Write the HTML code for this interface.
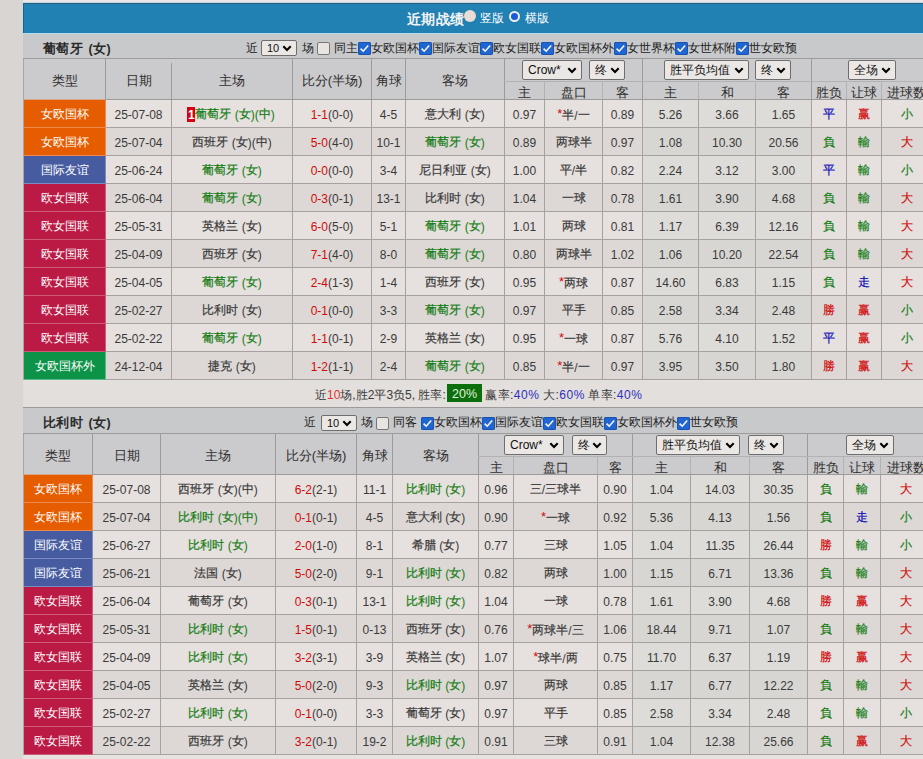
<!DOCTYPE html><html><head><meta charset="utf-8"><style>
html,body{margin:0;padding:0;}
body{width:923px;height:759px;overflow:hidden;position:relative;background:#d9d5d2;font-family:"Liberation Sans", sans-serif;font-size:12px;}
.a{position:absolute;}
.t{position:absolute;text-align:center;white-space:nowrap;overflow:visible;}
.c{font-style:normal;font-weight:inherit;}
.td .c{-webkit-text-stroke:0.2px currentColor;position:relative;top:-1px;}
.ty .c{position:relative;top:-1px;}
.sel{position:absolute;background:#ebe7e5;border:1px solid #6e6e6e;border-radius:2px;color:#111;white-space:nowrap;box-sizing:content-box;}
.sel .sl{position:absolute;left:5px;top:0;}
.sel .chev{position:absolute;right:4px;top:50%;margin-top:-3.5px;}
.badge{display:inline-block;background:#d80010;color:#fff;font-weight:bold;width:8px;height:15px;line-height:16px;text-align:center;font-size:12px;vertical-align:middle;margin-top:-3px;margin-left:-2px;}
</style></head><body><div class="a" style="left:23px;top:0px;width:900px;height:2px;background:#ede6e4;"></div><div class="a" style="left:22px;top:2px;width:901px;height:32px;background:#b8dcec;"></div><div class="a" style="left:23px;top:3px;width:900px;height:30px;background:#2181b3;box-shadow: inset 1px 1px 0 #2b5f78;"></div><div class="t" style="left:407px;top:3.5px;width:60px;height:30px;line-height:30px;color:#f4f4f4;font-weight:600;font-size:14px;letter-spacing:0.3px;text-align:left;"><i class="c">近期战绩</i></div><div class="a" style="left:464px;top:10px;width:12px;height:12px;border-radius:50%;background:#e8dcd4;"></div><div class="t" style="left:480px;top:3px;width:30px;height:30px;line-height:30px;color:#ffffff;text-align:left;"><i class="c">竖版</i></div><div class="a" style="left:509px;top:10.5px;width:7px;height:7px;border-radius:50%;background:#1a5cd8;border:2px solid #eeeeee;"></div><div class="t" style="left:525px;top:3px;width:30px;height:30px;line-height:30px;color:#ffffff;text-align:left;"><i class="c">横版</i></div><div class="a" style="left:23px;top:34px;width:900px;height:24px;background:#c8c9cb;"></div><div class="a" style="left:23px;top:58px;width:900px;height:1px;background:#9c9a9a;"></div><div class="t" style="left:43px;top:36.5px;width:120px;height:24px;line-height:24px;color:#2a2a2a;font-weight:bold;font-size:12.5px;letter-spacing:0.4px;word-spacing:1.5px;text-align:left;"><i class="c">葡萄牙</i> (<i class="c">女</i>)</div><div class="t" style="left:246px;top:36px;width:14px;height:24px;line-height:24px;color:#222;text-align:left;"><i class="c">近</i></div><div class="sel" style="left:261px;top:40px;width:34px;height:14px;line-height:14px;font-size:11px;"><span class="sl">10</span><svg class="chev" width="10" height="7" viewBox="0 0 10 7"><path d="M1.3 1.2 L5 4.9 L8.7 1.2" fill="none" stroke="#000" stroke-width="2.1"/></svg></div><div class="t" style="left:302px;top:36px;width:14px;height:24px;line-height:24px;color:#222;text-align:left;"><i class="c">场</i></div><div class="a" style="left:317px;top:42px;width:11px;height:11px;background:#e8e4e2;border:1px solid #777;border-radius:2px;"></div><div class="t" style="left:334px;top:36px;width:26px;height:24px;line-height:24px;color:#222;text-align:left;"><i class="c">同主</i></div><div class="a" style="left:358px;top:42px;width:13px;height:13px;background:#2066d2;border-radius:2px;box-shadow:inset 0 0 0 1px #1a52b0;"><svg width="13" height="13" viewBox="0 0 13 13" style="position:absolute;left:0;top:0"><path d="M2.6 6.6 L5.2 9.2 L10.2 3.4" fill="none" stroke="#f4f4f4" stroke-width="1.6"/></svg></div><div class="t" style="left:371px;top:36px;width:50px;height:24px;line-height:24px;color:#222;text-align:left;"><i class="c">女欧国杯</i></div><div class="a" style="left:419px;top:42px;width:13px;height:13px;background:#2066d2;border-radius:2px;box-shadow:inset 0 0 0 1px #1a52b0;"><svg width="13" height="13" viewBox="0 0 13 13" style="position:absolute;left:0;top:0"><path d="M2.6 6.6 L5.2 9.2 L10.2 3.4" fill="none" stroke="#f4f4f4" stroke-width="1.6"/></svg></div><div class="t" style="left:432px;top:36px;width:50px;height:24px;line-height:24px;color:#222;text-align:left;"><i class="c">国际友谊</i></div><div class="a" style="left:480px;top:42px;width:13px;height:13px;background:#2066d2;border-radius:2px;box-shadow:inset 0 0 0 1px #1a52b0;"><svg width="13" height="13" viewBox="0 0 13 13" style="position:absolute;left:0;top:0"><path d="M2.6 6.6 L5.2 9.2 L10.2 3.4" fill="none" stroke="#f4f4f4" stroke-width="1.6"/></svg></div><div class="t" style="left:493px;top:36px;width:50px;height:24px;line-height:24px;color:#222;text-align:left;"><i class="c">欧女国联</i></div><div class="a" style="left:541px;top:42px;width:13px;height:13px;background:#2066d2;border-radius:2px;box-shadow:inset 0 0 0 1px #1a52b0;"><svg width="13" height="13" viewBox="0 0 13 13" style="position:absolute;left:0;top:0"><path d="M2.6 6.6 L5.2 9.2 L10.2 3.4" fill="none" stroke="#f4f4f4" stroke-width="1.6"/></svg></div><div class="t" style="left:554px;top:36px;width:62px;height:24px;line-height:24px;color:#222;text-align:left;"><i class="c">女欧国杯外</i></div><div class="a" style="left:614px;top:42px;width:13px;height:13px;background:#2066d2;border-radius:2px;box-shadow:inset 0 0 0 1px #1a52b0;"><svg width="13" height="13" viewBox="0 0 13 13" style="position:absolute;left:0;top:0"><path d="M2.6 6.6 L5.2 9.2 L10.2 3.4" fill="none" stroke="#f4f4f4" stroke-width="1.6"/></svg></div><div class="t" style="left:627px;top:36px;width:50px;height:24px;line-height:24px;color:#222;text-align:left;"><i class="c">女世界杯</i></div><div class="a" style="left:675px;top:42px;width:13px;height:13px;background:#2066d2;border-radius:2px;box-shadow:inset 0 0 0 1px #1a52b0;"><svg width="13" height="13" viewBox="0 0 13 13" style="position:absolute;left:0;top:0"><path d="M2.6 6.6 L5.2 9.2 L10.2 3.4" fill="none" stroke="#f4f4f4" stroke-width="1.6"/></svg></div><div class="t" style="left:688px;top:36px;width:50px;height:24px;line-height:24px;color:#222;text-align:left;"><i class="c">女世杯附</i></div><div class="a" style="left:736px;top:42px;width:13px;height:13px;background:#2066d2;border-radius:2px;box-shadow:inset 0 0 0 1px #1a52b0;"><svg width="13" height="13" viewBox="0 0 13 13" style="position:absolute;left:0;top:0"><path d="M2.6 6.6 L5.2 9.2 L10.2 3.4" fill="none" stroke="#f4f4f4" stroke-width="1.6"/></svg></div><div class="t" style="left:749px;top:36px;width:50px;height:24px;line-height:24px;color:#222;text-align:left;"><i class="c">世女欧预</i></div><div class="a" style="left:23px;top:59px;width:900px;height:40px;background:#cbcacc;"></div><div class="a" style="left:23px;top:99px;width:900px;height:1px;background:#9c9a9a;"></div><div class="t" style="left:24px;top:61px;width:81px;height:40px;line-height:40px;color:#2e2e2e;font-size:13px;"><i class="c">类型</i></div><div class="t" style="left:106px;top:61px;width:65px;height:40px;line-height:40px;color:#2e2e2e;font-size:13px;"><i class="c">日期</i></div><div class="t" style="left:172px;top:61px;width:120px;height:40px;line-height:40px;color:#2e2e2e;font-size:13px;"><i class="c">主场</i></div><div class="t" style="left:293px;top:61px;width:78px;height:40px;line-height:40px;color:#2e2e2e;font-size:13px;"><i class="c">比分</i>(<i class="c">半场</i>)</div><div class="t" style="left:372px;top:61px;width:33px;height:40px;line-height:40px;color:#2e2e2e;font-size:13px;"><i class="c">角球</i></div><div class="t" style="left:406px;top:61px;width:98px;height:40px;line-height:40px;color:#2e2e2e;font-size:13px;"><i class="c">客场</i></div><div class="a" style="left:105px;top:59px;width:1px;height:40px;background:#9c9a9a;"></div><div class="a" style="left:171px;top:59px;width:1px;height:40px;background:#9c9a9a;"></div><div class="a" style="left:292px;top:59px;width:1px;height:40px;background:#9c9a9a;"></div><div class="a" style="left:371px;top:59px;width:1px;height:40px;background:#9c9a9a;"></div><div class="a" style="left:405px;top:59px;width:1px;height:40px;background:#9c9a9a;"></div><div class="a" style="left:504px;top:59px;width:1px;height:40px;background:#9c9a9a;"></div><div class="a" style="left:642px;top:59px;width:1px;height:40px;background:#9c9a9a;"></div><div class="a" style="left:811px;top:59px;width:1px;height:40px;background:#9c9a9a;"></div><div class="a" style="left:504px;top:81px;width:419px;height:1px;background:#b3b1b1;"></div><div class="a" style="left:544px;top:82px;width:1px;height:17px;background:#b3b1b1;"></div><div class="a" style="left:602px;top:82px;width:1px;height:17px;background:#b3b1b1;"></div><div class="a" style="left:698px;top:82px;width:1px;height:17px;background:#b3b1b1;"></div><div class="a" style="left:755px;top:82px;width:1px;height:17px;background:#b3b1b1;"></div><div class="a" style="left:846px;top:82px;width:1px;height:17px;background:#b3b1b1;"></div><div class="a" style="left:881px;top:82px;width:1px;height:17px;background:#b3b1b1;"></div><div class="t" style="left:505px;top:84px;width:39px;height:17px;line-height:17px;color:#2e2e2e;white-space:nowrap;font-size:13px;"><i class="c">主</i></div><div class="t" style="left:545px;top:84px;width:57px;height:17px;line-height:17px;color:#2e2e2e;white-space:nowrap;font-size:13px;"><i class="c">盘口</i></div><div class="t" style="left:603px;top:84px;width:39px;height:17px;line-height:17px;color:#2e2e2e;white-space:nowrap;font-size:13px;"><i class="c">客</i></div><div class="t" style="left:643px;top:84px;width:55px;height:17px;line-height:17px;color:#2e2e2e;white-space:nowrap;font-size:13px;"><i class="c">主</i></div><div class="t" style="left:699px;top:84px;width:56px;height:17px;line-height:17px;color:#2e2e2e;white-space:nowrap;font-size:13px;"><i class="c">和</i></div><div class="t" style="left:756px;top:84px;width:55px;height:17px;line-height:17px;color:#2e2e2e;white-space:nowrap;font-size:13px;"><i class="c">客</i></div><div class="t" style="left:812px;top:84px;width:34px;height:17px;line-height:17px;color:#2e2e2e;white-space:nowrap;font-size:13px;"><i class="c">胜负</i></div><div class="t" style="left:847px;top:84px;width:34px;height:17px;line-height:17px;color:#2e2e2e;white-space:nowrap;font-size:13px;"><i class="c">让球</i></div><div class="t" style="left:882px;top:84px;width:49px;height:17px;line-height:17px;color:#2e2e2e;white-space:nowrap;font-size:13px;"><i class="c">进球数</i></div><div class="sel" style="left:522px;top:60px;width:58px;height:18px;line-height:18px;font-size:12px;"><span class="sl">Crow*</span><svg class="chev" width="10" height="7" viewBox="0 0 10 7"><path d="M1.3 1.2 L5 4.9 L8.7 1.2" fill="none" stroke="#000" stroke-width="2.1"/></svg></div><div class="sel" style="left:589px;top:60px;width:34px;height:18px;line-height:18px;font-size:12px;"><span class="sl"><i class="c">终</i></span><svg class="chev" width="10" height="7" viewBox="0 0 10 7"><path d="M1.3 1.2 L5 4.9 L8.7 1.2" fill="none" stroke="#000" stroke-width="2.1"/></svg></div><div class="sel" style="left:664px;top:60px;width:83px;height:18px;line-height:18px;font-size:12px;"><span class="sl"><i class="c">胜平负均值</i></span><svg class="chev" width="10" height="7" viewBox="0 0 10 7"><path d="M1.3 1.2 L5 4.9 L8.7 1.2" fill="none" stroke="#000" stroke-width="2.1"/></svg></div><div class="sel" style="left:755px;top:60px;width:34px;height:18px;line-height:18px;font-size:12px;"><span class="sl"><i class="c">终</i></span><svg class="chev" width="10" height="7" viewBox="0 0 10 7"><path d="M1.3 1.2 L5 4.9 L8.7 1.2" fill="none" stroke="#000" stroke-width="2.1"/></svg></div><div class="sel" style="left:848px;top:60px;width:46px;height:18px;line-height:18px;font-size:12px;"><span class="sl"><i class="c">全场</i></span><svg class="chev" width="10" height="7" viewBox="0 0 10 7"><path d="M1.3 1.2 L5 4.9 L8.7 1.2" fill="none" stroke="#000" stroke-width="2.1"/></svg></div><div class="a" style="left:23px;top:100px;width:1px;height:28px;background:#c9c3c1;"></div><div class="a" style="left:24px;top:100px;width:81px;height:27px;background:#e65c00;"></div><div class="a" style="left:24px;top:127px;width:81px;height:1px;background:#ec8a50;"></div><div class="a" style="left:105px;top:100px;width:1px;height:28px;background:#ec8a50;"></div><div class="t ty" style="left:24px;top:102px;width:81px;height:27px;line-height:27px;color:#ffffff;white-space:nowrap;"><i class="c">女欧国杯</i></div><div class="a" style="left:106px;top:100px;width:65px;height:27px;background:#e6e0de;"></div><div class="a" style="left:106px;top:127px;width:66px;height:1px;background:#a5a2a0;"></div><div class="a" style="left:171px;top:100px;width:1px;height:28px;background:#a5a2a0;"></div><div class="t td" style="left:106px;top:102px;width:65px;height:27px;line-height:27px;color:#3a3a3a;white-space:nowrap;">25-07-08</div><div class="a" style="left:172px;top:100px;width:120px;height:27px;background:#e6e0de;"></div><div class="a" style="left:172px;top:127px;width:121px;height:1px;background:#a5a2a0;"></div><div class="a" style="left:292px;top:100px;width:1px;height:28px;background:#a5a2a0;"></div><div class="t td" style="left:172px;top:102px;width:120px;height:27px;line-height:27px;color:#3a3a3a;white-space:nowrap;"><span class="badge">1</span><span style="color:#157d15"><i class="c">葡萄牙</i> (<i class="c">女</i>)(<i class="c">中</i>)</span></div><div class="a" style="left:293px;top:100px;width:78px;height:27px;background:#e6e0de;"></div><div class="a" style="left:293px;top:127px;width:79px;height:1px;background:#a5a2a0;"></div><div class="a" style="left:371px;top:100px;width:1px;height:28px;background:#a5a2a0;"></div><div class="t td" style="left:293px;top:102px;width:78px;height:27px;line-height:27px;color:#3a3a3a;white-space:nowrap;"><span style="color:#d00a0a">1-1</span>(0-0)</div><div class="a" style="left:372px;top:100px;width:33px;height:27px;background:#e6e0de;"></div><div class="a" style="left:372px;top:127px;width:34px;height:1px;background:#a5a2a0;"></div><div class="a" style="left:405px;top:100px;width:1px;height:28px;background:#a5a2a0;"></div><div class="t td" style="left:372px;top:102px;width:33px;height:27px;line-height:27px;color:#3a3a3a;white-space:nowrap;">4-5</div><div class="a" style="left:406px;top:100px;width:98px;height:27px;background:#e6e0de;"></div><div class="a" style="left:406px;top:127px;width:99px;height:1px;background:#a5a2a0;"></div><div class="a" style="left:504px;top:100px;width:1px;height:28px;background:#a5a2a0;"></div><div class="t td" style="left:406px;top:102px;width:98px;height:27px;line-height:27px;color:#3a3a3a;white-space:nowrap;"><span style="color:#3a3a3a"><i class="c">意大利</i> (<i class="c">女</i>)</span></div><div class="a" style="left:505px;top:100px;width:39px;height:27px;background:#e6e0de;"></div><div class="a" style="left:505px;top:127px;width:40px;height:1px;background:#a5a2a0;"></div><div class="a" style="left:544px;top:100px;width:1px;height:28px;background:#a5a2a0;"></div><div class="t td" style="left:505px;top:102px;width:39px;height:27px;line-height:27px;color:#3a3a3a;white-space:nowrap;">0.97</div><div class="a" style="left:545px;top:100px;width:57px;height:27px;background:#e6e0de;"></div><div class="a" style="left:545px;top:127px;width:58px;height:1px;background:#a5a2a0;"></div><div class="a" style="left:602px;top:100px;width:1px;height:28px;background:#a5a2a0;"></div><div class="t td" style="left:545px;top:102px;width:57px;height:27px;line-height:27px;color:#3a3a3a;white-space:nowrap;"><span style="color:#d00a0a;position:relative;top:-2px;font-size:13px">*</span><i class="c">半</i>/<i class="c">一</i></div><div class="a" style="left:603px;top:100px;width:39px;height:27px;background:#e6e0de;"></div><div class="a" style="left:603px;top:127px;width:40px;height:1px;background:#a5a2a0;"></div><div class="a" style="left:642px;top:100px;width:1px;height:28px;background:#a5a2a0;"></div><div class="t td" style="left:603px;top:102px;width:39px;height:27px;line-height:27px;color:#3a3a3a;white-space:nowrap;">0.89</div><div class="a" style="left:643px;top:100px;width:55px;height:27px;background:#dddcd8;"></div><div class="a" style="left:643px;top:127px;width:56px;height:1px;background:#a5a2a0;"></div><div class="a" style="left:698px;top:100px;width:1px;height:28px;background:#a5a2a0;"></div><div class="t td" style="left:643px;top:102px;width:55px;height:27px;line-height:27px;color:#3a3a3a;white-space:nowrap;">5.26</div><div class="a" style="left:699px;top:100px;width:56px;height:27px;background:#dddcd8;"></div><div class="a" style="left:699px;top:127px;width:57px;height:1px;background:#a5a2a0;"></div><div class="a" style="left:755px;top:100px;width:1px;height:28px;background:#a5a2a0;"></div><div class="t td" style="left:699px;top:102px;width:56px;height:27px;line-height:27px;color:#3a3a3a;white-space:nowrap;">3.66</div><div class="a" style="left:756px;top:100px;width:55px;height:27px;background:#dddcd8;"></div><div class="a" style="left:756px;top:127px;width:56px;height:1px;background:#a5a2a0;"></div><div class="a" style="left:811px;top:100px;width:1px;height:28px;background:#a5a2a0;"></div><div class="t td" style="left:756px;top:102px;width:55px;height:27px;line-height:27px;color:#3a3a3a;white-space:nowrap;">1.65</div><div class="a" style="left:812px;top:100px;width:34px;height:27px;background:#e6e0de;"></div><div class="a" style="left:812px;top:127px;width:35px;height:1px;background:#a5a2a0;"></div><div class="a" style="left:846px;top:100px;width:1px;height:28px;background:#a5a2a0;"></div><div class="t td" style="left:812px;top:102px;width:34px;height:27px;line-height:27px;color:#0a0ab4;white-space:nowrap;"><i class="c">平</i></div><div class="a" style="left:847px;top:100px;width:34px;height:27px;background:#e6e0de;"></div><div class="a" style="left:847px;top:127px;width:35px;height:1px;background:#a5a2a0;"></div><div class="a" style="left:881px;top:100px;width:1px;height:28px;background:#a5a2a0;"></div><div class="t td" style="left:847px;top:102px;width:34px;height:27px;line-height:27px;color:#d00a0a;white-space:nowrap;"><i class="c">赢</i></div><div class="a" style="left:882px;top:100px;width:41px;height:27px;background:#e6e0de;"></div><div class="a" style="left:882px;top:127px;width:42px;height:1px;background:#a5a2a0;"></div><div class="t td" style="left:882px;top:102px;width:49px;height:27px;line-height:27px;color:#157d15;white-space:nowrap;"><i class="c">小</i></div><div class="a" style="left:23px;top:128px;width:1px;height:28px;background:#c9c3c1;"></div><div class="a" style="left:24px;top:128px;width:81px;height:27px;background:#e65c00;"></div><div class="a" style="left:24px;top:155px;width:81px;height:1px;background:#ec8a50;"></div><div class="a" style="left:105px;top:128px;width:1px;height:28px;background:#ec8a50;"></div><div class="t ty" style="left:24px;top:130px;width:81px;height:27px;line-height:27px;color:#ffffff;white-space:nowrap;"><i class="c">女欧国杯</i></div><div class="a" style="left:106px;top:128px;width:65px;height:27px;background:#ddd8d6;"></div><div class="a" style="left:106px;top:155px;width:66px;height:1px;background:#a5a2a0;"></div><div class="a" style="left:171px;top:128px;width:1px;height:28px;background:#a5a2a0;"></div><div class="t td" style="left:106px;top:130px;width:65px;height:27px;line-height:27px;color:#3a3a3a;white-space:nowrap;">25-07-04</div><div class="a" style="left:172px;top:128px;width:120px;height:27px;background:#ddd8d6;"></div><div class="a" style="left:172px;top:155px;width:121px;height:1px;background:#a5a2a0;"></div><div class="a" style="left:292px;top:128px;width:1px;height:28px;background:#a5a2a0;"></div><div class="t td" style="left:172px;top:130px;width:120px;height:27px;line-height:27px;color:#3a3a3a;white-space:nowrap;"><span style="color:#3a3a3a"><i class="c">西班牙</i> (<i class="c">女</i>)(<i class="c">中</i>)</span></div><div class="a" style="left:293px;top:128px;width:78px;height:27px;background:#ddd8d6;"></div><div class="a" style="left:293px;top:155px;width:79px;height:1px;background:#a5a2a0;"></div><div class="a" style="left:371px;top:128px;width:1px;height:28px;background:#a5a2a0;"></div><div class="t td" style="left:293px;top:130px;width:78px;height:27px;line-height:27px;color:#3a3a3a;white-space:nowrap;"><span style="color:#d00a0a">5-0</span>(4-0)</div><div class="a" style="left:372px;top:128px;width:33px;height:27px;background:#ddd8d6;"></div><div class="a" style="left:372px;top:155px;width:34px;height:1px;background:#a5a2a0;"></div><div class="a" style="left:405px;top:128px;width:1px;height:28px;background:#a5a2a0;"></div><div class="t td" style="left:372px;top:130px;width:33px;height:27px;line-height:27px;color:#3a3a3a;white-space:nowrap;">10-1</div><div class="a" style="left:406px;top:128px;width:98px;height:27px;background:#ddd8d6;"></div><div class="a" style="left:406px;top:155px;width:99px;height:1px;background:#a5a2a0;"></div><div class="a" style="left:504px;top:128px;width:1px;height:28px;background:#a5a2a0;"></div><div class="t td" style="left:406px;top:130px;width:98px;height:27px;line-height:27px;color:#3a3a3a;white-space:nowrap;"><span style="color:#157d15"><i class="c">葡萄牙</i> (<i class="c">女</i>)</span></div><div class="a" style="left:505px;top:128px;width:39px;height:27px;background:#ddd8d6;"></div><div class="a" style="left:505px;top:155px;width:40px;height:1px;background:#a5a2a0;"></div><div class="a" style="left:544px;top:128px;width:1px;height:28px;background:#a5a2a0;"></div><div class="t td" style="left:505px;top:130px;width:39px;height:27px;line-height:27px;color:#3a3a3a;white-space:nowrap;">0.89</div><div class="a" style="left:545px;top:128px;width:57px;height:27px;background:#ddd8d6;"></div><div class="a" style="left:545px;top:155px;width:58px;height:1px;background:#a5a2a0;"></div><div class="a" style="left:602px;top:128px;width:1px;height:28px;background:#a5a2a0;"></div><div class="t td" style="left:545px;top:130px;width:57px;height:27px;line-height:27px;color:#3a3a3a;white-space:nowrap;"><i class="c">两球半</i></div><div class="a" style="left:603px;top:128px;width:39px;height:27px;background:#ddd8d6;"></div><div class="a" style="left:603px;top:155px;width:40px;height:1px;background:#a5a2a0;"></div><div class="a" style="left:642px;top:128px;width:1px;height:28px;background:#a5a2a0;"></div><div class="t td" style="left:603px;top:130px;width:39px;height:27px;line-height:27px;color:#3a3a3a;white-space:nowrap;">0.97</div><div class="a" style="left:643px;top:128px;width:55px;height:27px;background:#d7d6d3;"></div><div class="a" style="left:643px;top:155px;width:56px;height:1px;background:#a5a2a0;"></div><div class="a" style="left:698px;top:128px;width:1px;height:28px;background:#a5a2a0;"></div><div class="t td" style="left:643px;top:130px;width:55px;height:27px;line-height:27px;color:#3a3a3a;white-space:nowrap;">1.08</div><div class="a" style="left:699px;top:128px;width:56px;height:27px;background:#d7d6d3;"></div><div class="a" style="left:699px;top:155px;width:57px;height:1px;background:#a5a2a0;"></div><div class="a" style="left:755px;top:128px;width:1px;height:28px;background:#a5a2a0;"></div><div class="t td" style="left:699px;top:130px;width:56px;height:27px;line-height:27px;color:#3a3a3a;white-space:nowrap;">10.30</div><div class="a" style="left:756px;top:128px;width:55px;height:27px;background:#d7d6d3;"></div><div class="a" style="left:756px;top:155px;width:56px;height:1px;background:#a5a2a0;"></div><div class="a" style="left:811px;top:128px;width:1px;height:28px;background:#a5a2a0;"></div><div class="t td" style="left:756px;top:130px;width:55px;height:27px;line-height:27px;color:#3a3a3a;white-space:nowrap;">20.56</div><div class="a" style="left:812px;top:128px;width:34px;height:27px;background:#ddd8d6;"></div><div class="a" style="left:812px;top:155px;width:35px;height:1px;background:#a5a2a0;"></div><div class="a" style="left:846px;top:128px;width:1px;height:28px;background:#a5a2a0;"></div><div class="t td" style="left:812px;top:130px;width:34px;height:27px;line-height:27px;color:#157d15;white-space:nowrap;"><i class="c">負</i></div><div class="a" style="left:847px;top:128px;width:34px;height:27px;background:#ddd8d6;"></div><div class="a" style="left:847px;top:155px;width:35px;height:1px;background:#a5a2a0;"></div><div class="a" style="left:881px;top:128px;width:1px;height:28px;background:#a5a2a0;"></div><div class="t td" style="left:847px;top:130px;width:34px;height:27px;line-height:27px;color:#157d15;white-space:nowrap;"><i class="c">輸</i></div><div class="a" style="left:882px;top:128px;width:41px;height:27px;background:#ddd8d6;"></div><div class="a" style="left:882px;top:155px;width:42px;height:1px;background:#a5a2a0;"></div><div class="t td" style="left:882px;top:130px;width:49px;height:27px;line-height:27px;color:#d00a0a;white-space:nowrap;"><i class="c">大</i></div><div class="a" style="left:23px;top:156px;width:1px;height:28px;background:#c9c3c1;"></div><div class="a" style="left:24px;top:156px;width:81px;height:27px;background:#475ca0;"></div><div class="a" style="left:24px;top:183px;width:81px;height:1px;background:#7c8cc0;"></div><div class="a" style="left:105px;top:156px;width:1px;height:28px;background:#7c8cc0;"></div><div class="t ty" style="left:24px;top:158px;width:81px;height:27px;line-height:27px;color:#ffffff;white-space:nowrap;"><i class="c">国际友谊</i></div><div class="a" style="left:106px;top:156px;width:65px;height:27px;background:#e6e0de;"></div><div class="a" style="left:106px;top:183px;width:66px;height:1px;background:#a5a2a0;"></div><div class="a" style="left:171px;top:156px;width:1px;height:28px;background:#a5a2a0;"></div><div class="t td" style="left:106px;top:158px;width:65px;height:27px;line-height:27px;color:#3a3a3a;white-space:nowrap;">25-06-24</div><div class="a" style="left:172px;top:156px;width:120px;height:27px;background:#e6e0de;"></div><div class="a" style="left:172px;top:183px;width:121px;height:1px;background:#a5a2a0;"></div><div class="a" style="left:292px;top:156px;width:1px;height:28px;background:#a5a2a0;"></div><div class="t td" style="left:172px;top:158px;width:120px;height:27px;line-height:27px;color:#3a3a3a;white-space:nowrap;"><span style="color:#157d15"><i class="c">葡萄牙</i> (<i class="c">女</i>)</span></div><div class="a" style="left:293px;top:156px;width:78px;height:27px;background:#e6e0de;"></div><div class="a" style="left:293px;top:183px;width:79px;height:1px;background:#a5a2a0;"></div><div class="a" style="left:371px;top:156px;width:1px;height:28px;background:#a5a2a0;"></div><div class="t td" style="left:293px;top:158px;width:78px;height:27px;line-height:27px;color:#3a3a3a;white-space:nowrap;"><span style="color:#d00a0a">0-0</span>(0-0)</div><div class="a" style="left:372px;top:156px;width:33px;height:27px;background:#e6e0de;"></div><div class="a" style="left:372px;top:183px;width:34px;height:1px;background:#a5a2a0;"></div><div class="a" style="left:405px;top:156px;width:1px;height:28px;background:#a5a2a0;"></div><div class="t td" style="left:372px;top:158px;width:33px;height:27px;line-height:27px;color:#3a3a3a;white-space:nowrap;">3-4</div><div class="a" style="left:406px;top:156px;width:98px;height:27px;background:#e6e0de;"></div><div class="a" style="left:406px;top:183px;width:99px;height:1px;background:#a5a2a0;"></div><div class="a" style="left:504px;top:156px;width:1px;height:28px;background:#a5a2a0;"></div><div class="t td" style="left:406px;top:158px;width:98px;height:27px;line-height:27px;color:#3a3a3a;white-space:nowrap;"><span style="color:#3a3a3a"><i class="c">尼日利亚</i> (<i class="c">女</i>)</span></div><div class="a" style="left:505px;top:156px;width:39px;height:27px;background:#e6e0de;"></div><div class="a" style="left:505px;top:183px;width:40px;height:1px;background:#a5a2a0;"></div><div class="a" style="left:544px;top:156px;width:1px;height:28px;background:#a5a2a0;"></div><div class="t td" style="left:505px;top:158px;width:39px;height:27px;line-height:27px;color:#3a3a3a;white-space:nowrap;">1.00</div><div class="a" style="left:545px;top:156px;width:57px;height:27px;background:#e6e0de;"></div><div class="a" style="left:545px;top:183px;width:58px;height:1px;background:#a5a2a0;"></div><div class="a" style="left:602px;top:156px;width:1px;height:28px;background:#a5a2a0;"></div><div class="t td" style="left:545px;top:158px;width:57px;height:27px;line-height:27px;color:#3a3a3a;white-space:nowrap;"><i class="c">平</i>/<i class="c">半</i></div><div class="a" style="left:603px;top:156px;width:39px;height:27px;background:#e6e0de;"></div><div class="a" style="left:603px;top:183px;width:40px;height:1px;background:#a5a2a0;"></div><div class="a" style="left:642px;top:156px;width:1px;height:28px;background:#a5a2a0;"></div><div class="t td" style="left:603px;top:158px;width:39px;height:27px;line-height:27px;color:#3a3a3a;white-space:nowrap;">0.82</div><div class="a" style="left:643px;top:156px;width:55px;height:27px;background:#dddcd8;"></div><div class="a" style="left:643px;top:183px;width:56px;height:1px;background:#a5a2a0;"></div><div class="a" style="left:698px;top:156px;width:1px;height:28px;background:#a5a2a0;"></div><div class="t td" style="left:643px;top:158px;width:55px;height:27px;line-height:27px;color:#3a3a3a;white-space:nowrap;">2.24</div><div class="a" style="left:699px;top:156px;width:56px;height:27px;background:#dddcd8;"></div><div class="a" style="left:699px;top:183px;width:57px;height:1px;background:#a5a2a0;"></div><div class="a" style="left:755px;top:156px;width:1px;height:28px;background:#a5a2a0;"></div><div class="t td" style="left:699px;top:158px;width:56px;height:27px;line-height:27px;color:#3a3a3a;white-space:nowrap;">3.12</div><div class="a" style="left:756px;top:156px;width:55px;height:27px;background:#dddcd8;"></div><div class="a" style="left:756px;top:183px;width:56px;height:1px;background:#a5a2a0;"></div><div class="a" style="left:811px;top:156px;width:1px;height:28px;background:#a5a2a0;"></div><div class="t td" style="left:756px;top:158px;width:55px;height:27px;line-height:27px;color:#3a3a3a;white-space:nowrap;">3.00</div><div class="a" style="left:812px;top:156px;width:34px;height:27px;background:#e6e0de;"></div><div class="a" style="left:812px;top:183px;width:35px;height:1px;background:#a5a2a0;"></div><div class="a" style="left:846px;top:156px;width:1px;height:28px;background:#a5a2a0;"></div><div class="t td" style="left:812px;top:158px;width:34px;height:27px;line-height:27px;color:#0a0ab4;white-space:nowrap;"><i class="c">平</i></div><div class="a" style="left:847px;top:156px;width:34px;height:27px;background:#e6e0de;"></div><div class="a" style="left:847px;top:183px;width:35px;height:1px;background:#a5a2a0;"></div><div class="a" style="left:881px;top:156px;width:1px;height:28px;background:#a5a2a0;"></div><div class="t td" style="left:847px;top:158px;width:34px;height:27px;line-height:27px;color:#157d15;white-space:nowrap;"><i class="c">輸</i></div><div class="a" style="left:882px;top:156px;width:41px;height:27px;background:#e6e0de;"></div><div class="a" style="left:882px;top:183px;width:42px;height:1px;background:#a5a2a0;"></div><div class="t td" style="left:882px;top:158px;width:49px;height:27px;line-height:27px;color:#157d15;white-space:nowrap;"><i class="c">小</i></div><div class="a" style="left:23px;top:184px;width:1px;height:28px;background:#c9c3c1;"></div><div class="a" style="left:24px;top:184px;width:81px;height:27px;background:#bb1a45;"></div><div class="a" style="left:24px;top:211px;width:81px;height:1px;background:#cc5a78;"></div><div class="a" style="left:105px;top:184px;width:1px;height:28px;background:#cc5a78;"></div><div class="t ty" style="left:24px;top:186px;width:81px;height:27px;line-height:27px;color:#ffffff;white-space:nowrap;"><i class="c">欧女国联</i></div><div class="a" style="left:106px;top:184px;width:65px;height:27px;background:#ddd8d6;"></div><div class="a" style="left:106px;top:211px;width:66px;height:1px;background:#a5a2a0;"></div><div class="a" style="left:171px;top:184px;width:1px;height:28px;background:#a5a2a0;"></div><div class="t td" style="left:106px;top:186px;width:65px;height:27px;line-height:27px;color:#3a3a3a;white-space:nowrap;">25-06-04</div><div class="a" style="left:172px;top:184px;width:120px;height:27px;background:#ddd8d6;"></div><div class="a" style="left:172px;top:211px;width:121px;height:1px;background:#a5a2a0;"></div><div class="a" style="left:292px;top:184px;width:1px;height:28px;background:#a5a2a0;"></div><div class="t td" style="left:172px;top:186px;width:120px;height:27px;line-height:27px;color:#3a3a3a;white-space:nowrap;"><span style="color:#157d15"><i class="c">葡萄牙</i> (<i class="c">女</i>)</span></div><div class="a" style="left:293px;top:184px;width:78px;height:27px;background:#ddd8d6;"></div><div class="a" style="left:293px;top:211px;width:79px;height:1px;background:#a5a2a0;"></div><div class="a" style="left:371px;top:184px;width:1px;height:28px;background:#a5a2a0;"></div><div class="t td" style="left:293px;top:186px;width:78px;height:27px;line-height:27px;color:#3a3a3a;white-space:nowrap;"><span style="color:#d00a0a">0-3</span>(0-1)</div><div class="a" style="left:372px;top:184px;width:33px;height:27px;background:#ddd8d6;"></div><div class="a" style="left:372px;top:211px;width:34px;height:1px;background:#a5a2a0;"></div><div class="a" style="left:405px;top:184px;width:1px;height:28px;background:#a5a2a0;"></div><div class="t td" style="left:372px;top:186px;width:33px;height:27px;line-height:27px;color:#3a3a3a;white-space:nowrap;">13-1</div><div class="a" style="left:406px;top:184px;width:98px;height:27px;background:#ddd8d6;"></div><div class="a" style="left:406px;top:211px;width:99px;height:1px;background:#a5a2a0;"></div><div class="a" style="left:504px;top:184px;width:1px;height:28px;background:#a5a2a0;"></div><div class="t td" style="left:406px;top:186px;width:98px;height:27px;line-height:27px;color:#3a3a3a;white-space:nowrap;"><span style="color:#3a3a3a"><i class="c">比利时</i> (<i class="c">女</i>)</span></div><div class="a" style="left:505px;top:184px;width:39px;height:27px;background:#ddd8d6;"></div><div class="a" style="left:505px;top:211px;width:40px;height:1px;background:#a5a2a0;"></div><div class="a" style="left:544px;top:184px;width:1px;height:28px;background:#a5a2a0;"></div><div class="t td" style="left:505px;top:186px;width:39px;height:27px;line-height:27px;color:#3a3a3a;white-space:nowrap;">1.04</div><div class="a" style="left:545px;top:184px;width:57px;height:27px;background:#ddd8d6;"></div><div class="a" style="left:545px;top:211px;width:58px;height:1px;background:#a5a2a0;"></div><div class="a" style="left:602px;top:184px;width:1px;height:28px;background:#a5a2a0;"></div><div class="t td" style="left:545px;top:186px;width:57px;height:27px;line-height:27px;color:#3a3a3a;white-space:nowrap;"><i class="c">一球</i></div><div class="a" style="left:603px;top:184px;width:39px;height:27px;background:#ddd8d6;"></div><div class="a" style="left:603px;top:211px;width:40px;height:1px;background:#a5a2a0;"></div><div class="a" style="left:642px;top:184px;width:1px;height:28px;background:#a5a2a0;"></div><div class="t td" style="left:603px;top:186px;width:39px;height:27px;line-height:27px;color:#3a3a3a;white-space:nowrap;">0.78</div><div class="a" style="left:643px;top:184px;width:55px;height:27px;background:#d7d6d3;"></div><div class="a" style="left:643px;top:211px;width:56px;height:1px;background:#a5a2a0;"></div><div class="a" style="left:698px;top:184px;width:1px;height:28px;background:#a5a2a0;"></div><div class="t td" style="left:643px;top:186px;width:55px;height:27px;line-height:27px;color:#3a3a3a;white-space:nowrap;">1.61</div><div class="a" style="left:699px;top:184px;width:56px;height:27px;background:#d7d6d3;"></div><div class="a" style="left:699px;top:211px;width:57px;height:1px;background:#a5a2a0;"></div><div class="a" style="left:755px;top:184px;width:1px;height:28px;background:#a5a2a0;"></div><div class="t td" style="left:699px;top:186px;width:56px;height:27px;line-height:27px;color:#3a3a3a;white-space:nowrap;">3.90</div><div class="a" style="left:756px;top:184px;width:55px;height:27px;background:#d7d6d3;"></div><div class="a" style="left:756px;top:211px;width:56px;height:1px;background:#a5a2a0;"></div><div class="a" style="left:811px;top:184px;width:1px;height:28px;background:#a5a2a0;"></div><div class="t td" style="left:756px;top:186px;width:55px;height:27px;line-height:27px;color:#3a3a3a;white-space:nowrap;">4.68</div><div class="a" style="left:812px;top:184px;width:34px;height:27px;background:#ddd8d6;"></div><div class="a" style="left:812px;top:211px;width:35px;height:1px;background:#a5a2a0;"></div><div class="a" style="left:846px;top:184px;width:1px;height:28px;background:#a5a2a0;"></div><div class="t td" style="left:812px;top:186px;width:34px;height:27px;line-height:27px;color:#157d15;white-space:nowrap;"><i class="c">負</i></div><div class="a" style="left:847px;top:184px;width:34px;height:27px;background:#ddd8d6;"></div><div class="a" style="left:847px;top:211px;width:35px;height:1px;background:#a5a2a0;"></div><div class="a" style="left:881px;top:184px;width:1px;height:28px;background:#a5a2a0;"></div><div class="t td" style="left:847px;top:186px;width:34px;height:27px;line-height:27px;color:#157d15;white-space:nowrap;"><i class="c">輸</i></div><div class="a" style="left:882px;top:184px;width:41px;height:27px;background:#ddd8d6;"></div><div class="a" style="left:882px;top:211px;width:42px;height:1px;background:#a5a2a0;"></div><div class="t td" style="left:882px;top:186px;width:49px;height:27px;line-height:27px;color:#d00a0a;white-space:nowrap;"><i class="c">大</i></div><div class="a" style="left:23px;top:212px;width:1px;height:28px;background:#c9c3c1;"></div><div class="a" style="left:24px;top:212px;width:81px;height:27px;background:#bb1a45;"></div><div class="a" style="left:24px;top:239px;width:81px;height:1px;background:#cc5a78;"></div><div class="a" style="left:105px;top:212px;width:1px;height:28px;background:#cc5a78;"></div><div class="t ty" style="left:24px;top:214px;width:81px;height:27px;line-height:27px;color:#ffffff;white-space:nowrap;"><i class="c">欧女国联</i></div><div class="a" style="left:106px;top:212px;width:65px;height:27px;background:#e6e0de;"></div><div class="a" style="left:106px;top:239px;width:66px;height:1px;background:#a5a2a0;"></div><div class="a" style="left:171px;top:212px;width:1px;height:28px;background:#a5a2a0;"></div><div class="t td" style="left:106px;top:214px;width:65px;height:27px;line-height:27px;color:#3a3a3a;white-space:nowrap;">25-05-31</div><div class="a" style="left:172px;top:212px;width:120px;height:27px;background:#e6e0de;"></div><div class="a" style="left:172px;top:239px;width:121px;height:1px;background:#a5a2a0;"></div><div class="a" style="left:292px;top:212px;width:1px;height:28px;background:#a5a2a0;"></div><div class="t td" style="left:172px;top:214px;width:120px;height:27px;line-height:27px;color:#3a3a3a;white-space:nowrap;"><span style="color:#3a3a3a"><i class="c">英格兰</i> (<i class="c">女</i>)</span></div><div class="a" style="left:293px;top:212px;width:78px;height:27px;background:#e6e0de;"></div><div class="a" style="left:293px;top:239px;width:79px;height:1px;background:#a5a2a0;"></div><div class="a" style="left:371px;top:212px;width:1px;height:28px;background:#a5a2a0;"></div><div class="t td" style="left:293px;top:214px;width:78px;height:27px;line-height:27px;color:#3a3a3a;white-space:nowrap;"><span style="color:#d00a0a">6-0</span>(5-0)</div><div class="a" style="left:372px;top:212px;width:33px;height:27px;background:#e6e0de;"></div><div class="a" style="left:372px;top:239px;width:34px;height:1px;background:#a5a2a0;"></div><div class="a" style="left:405px;top:212px;width:1px;height:28px;background:#a5a2a0;"></div><div class="t td" style="left:372px;top:214px;width:33px;height:27px;line-height:27px;color:#3a3a3a;white-space:nowrap;">5-1</div><div class="a" style="left:406px;top:212px;width:98px;height:27px;background:#e6e0de;"></div><div class="a" style="left:406px;top:239px;width:99px;height:1px;background:#a5a2a0;"></div><div class="a" style="left:504px;top:212px;width:1px;height:28px;background:#a5a2a0;"></div><div class="t td" style="left:406px;top:214px;width:98px;height:27px;line-height:27px;color:#3a3a3a;white-space:nowrap;"><span style="color:#157d15"><i class="c">葡萄牙</i> (<i class="c">女</i>)</span></div><div class="a" style="left:505px;top:212px;width:39px;height:27px;background:#e6e0de;"></div><div class="a" style="left:505px;top:239px;width:40px;height:1px;background:#a5a2a0;"></div><div class="a" style="left:544px;top:212px;width:1px;height:28px;background:#a5a2a0;"></div><div class="t td" style="left:505px;top:214px;width:39px;height:27px;line-height:27px;color:#3a3a3a;white-space:nowrap;">1.01</div><div class="a" style="left:545px;top:212px;width:57px;height:27px;background:#e6e0de;"></div><div class="a" style="left:545px;top:239px;width:58px;height:1px;background:#a5a2a0;"></div><div class="a" style="left:602px;top:212px;width:1px;height:28px;background:#a5a2a0;"></div><div class="t td" style="left:545px;top:214px;width:57px;height:27px;line-height:27px;color:#3a3a3a;white-space:nowrap;"><i class="c">两球</i></div><div class="a" style="left:603px;top:212px;width:39px;height:27px;background:#e6e0de;"></div><div class="a" style="left:603px;top:239px;width:40px;height:1px;background:#a5a2a0;"></div><div class="a" style="left:642px;top:212px;width:1px;height:28px;background:#a5a2a0;"></div><div class="t td" style="left:603px;top:214px;width:39px;height:27px;line-height:27px;color:#3a3a3a;white-space:nowrap;">0.81</div><div class="a" style="left:643px;top:212px;width:55px;height:27px;background:#dddcd8;"></div><div class="a" style="left:643px;top:239px;width:56px;height:1px;background:#a5a2a0;"></div><div class="a" style="left:698px;top:212px;width:1px;height:28px;background:#a5a2a0;"></div><div class="t td" style="left:643px;top:214px;width:55px;height:27px;line-height:27px;color:#3a3a3a;white-space:nowrap;">1.17</div><div class="a" style="left:699px;top:212px;width:56px;height:27px;background:#dddcd8;"></div><div class="a" style="left:699px;top:239px;width:57px;height:1px;background:#a5a2a0;"></div><div class="a" style="left:755px;top:212px;width:1px;height:28px;background:#a5a2a0;"></div><div class="t td" style="left:699px;top:214px;width:56px;height:27px;line-height:27px;color:#3a3a3a;white-space:nowrap;">6.39</div><div class="a" style="left:756px;top:212px;width:55px;height:27px;background:#dddcd8;"></div><div class="a" style="left:756px;top:239px;width:56px;height:1px;background:#a5a2a0;"></div><div class="a" style="left:811px;top:212px;width:1px;height:28px;background:#a5a2a0;"></div><div class="t td" style="left:756px;top:214px;width:55px;height:27px;line-height:27px;color:#3a3a3a;white-space:nowrap;">12.16</div><div class="a" style="left:812px;top:212px;width:34px;height:27px;background:#e6e0de;"></div><div class="a" style="left:812px;top:239px;width:35px;height:1px;background:#a5a2a0;"></div><div class="a" style="left:846px;top:212px;width:1px;height:28px;background:#a5a2a0;"></div><div class="t td" style="left:812px;top:214px;width:34px;height:27px;line-height:27px;color:#157d15;white-space:nowrap;"><i class="c">負</i></div><div class="a" style="left:847px;top:212px;width:34px;height:27px;background:#e6e0de;"></div><div class="a" style="left:847px;top:239px;width:35px;height:1px;background:#a5a2a0;"></div><div class="a" style="left:881px;top:212px;width:1px;height:28px;background:#a5a2a0;"></div><div class="t td" style="left:847px;top:214px;width:34px;height:27px;line-height:27px;color:#157d15;white-space:nowrap;"><i class="c">輸</i></div><div class="a" style="left:882px;top:212px;width:41px;height:27px;background:#e6e0de;"></div><div class="a" style="left:882px;top:239px;width:42px;height:1px;background:#a5a2a0;"></div><div class="t td" style="left:882px;top:214px;width:49px;height:27px;line-height:27px;color:#d00a0a;white-space:nowrap;"><i class="c">大</i></div><div class="a" style="left:23px;top:240px;width:1px;height:28px;background:#c9c3c1;"></div><div class="a" style="left:24px;top:240px;width:81px;height:27px;background:#bb1a45;"></div><div class="a" style="left:24px;top:267px;width:81px;height:1px;background:#cc5a78;"></div><div class="a" style="left:105px;top:240px;width:1px;height:28px;background:#cc5a78;"></div><div class="t ty" style="left:24px;top:242px;width:81px;height:27px;line-height:27px;color:#ffffff;white-space:nowrap;"><i class="c">欧女国联</i></div><div class="a" style="left:106px;top:240px;width:65px;height:27px;background:#ddd8d6;"></div><div class="a" style="left:106px;top:267px;width:66px;height:1px;background:#a5a2a0;"></div><div class="a" style="left:171px;top:240px;width:1px;height:28px;background:#a5a2a0;"></div><div class="t td" style="left:106px;top:242px;width:65px;height:27px;line-height:27px;color:#3a3a3a;white-space:nowrap;">25-04-09</div><div class="a" style="left:172px;top:240px;width:120px;height:27px;background:#ddd8d6;"></div><div class="a" style="left:172px;top:267px;width:121px;height:1px;background:#a5a2a0;"></div><div class="a" style="left:292px;top:240px;width:1px;height:28px;background:#a5a2a0;"></div><div class="t td" style="left:172px;top:242px;width:120px;height:27px;line-height:27px;color:#3a3a3a;white-space:nowrap;"><span style="color:#3a3a3a"><i class="c">西班牙</i> (<i class="c">女</i>)</span></div><div class="a" style="left:293px;top:240px;width:78px;height:27px;background:#ddd8d6;"></div><div class="a" style="left:293px;top:267px;width:79px;height:1px;background:#a5a2a0;"></div><div class="a" style="left:371px;top:240px;width:1px;height:28px;background:#a5a2a0;"></div><div class="t td" style="left:293px;top:242px;width:78px;height:27px;line-height:27px;color:#3a3a3a;white-space:nowrap;"><span style="color:#d00a0a">7-1</span>(4-0)</div><div class="a" style="left:372px;top:240px;width:33px;height:27px;background:#ddd8d6;"></div><div class="a" style="left:372px;top:267px;width:34px;height:1px;background:#a5a2a0;"></div><div class="a" style="left:405px;top:240px;width:1px;height:28px;background:#a5a2a0;"></div><div class="t td" style="left:372px;top:242px;width:33px;height:27px;line-height:27px;color:#3a3a3a;white-space:nowrap;">8-0</div><div class="a" style="left:406px;top:240px;width:98px;height:27px;background:#ddd8d6;"></div><div class="a" style="left:406px;top:267px;width:99px;height:1px;background:#a5a2a0;"></div><div class="a" style="left:504px;top:240px;width:1px;height:28px;background:#a5a2a0;"></div><div class="t td" style="left:406px;top:242px;width:98px;height:27px;line-height:27px;color:#3a3a3a;white-space:nowrap;"><span style="color:#157d15"><i class="c">葡萄牙</i> (<i class="c">女</i>)</span></div><div class="a" style="left:505px;top:240px;width:39px;height:27px;background:#ddd8d6;"></div><div class="a" style="left:505px;top:267px;width:40px;height:1px;background:#a5a2a0;"></div><div class="a" style="left:544px;top:240px;width:1px;height:28px;background:#a5a2a0;"></div><div class="t td" style="left:505px;top:242px;width:39px;height:27px;line-height:27px;color:#3a3a3a;white-space:nowrap;">0.80</div><div class="a" style="left:545px;top:240px;width:57px;height:27px;background:#ddd8d6;"></div><div class="a" style="left:545px;top:267px;width:58px;height:1px;background:#a5a2a0;"></div><div class="a" style="left:602px;top:240px;width:1px;height:28px;background:#a5a2a0;"></div><div class="t td" style="left:545px;top:242px;width:57px;height:27px;line-height:27px;color:#3a3a3a;white-space:nowrap;"><i class="c">两球半</i></div><div class="a" style="left:603px;top:240px;width:39px;height:27px;background:#ddd8d6;"></div><div class="a" style="left:603px;top:267px;width:40px;height:1px;background:#a5a2a0;"></div><div class="a" style="left:642px;top:240px;width:1px;height:28px;background:#a5a2a0;"></div><div class="t td" style="left:603px;top:242px;width:39px;height:27px;line-height:27px;color:#3a3a3a;white-space:nowrap;">1.02</div><div class="a" style="left:643px;top:240px;width:55px;height:27px;background:#d7d6d3;"></div><div class="a" style="left:643px;top:267px;width:56px;height:1px;background:#a5a2a0;"></div><div class="a" style="left:698px;top:240px;width:1px;height:28px;background:#a5a2a0;"></div><div class="t td" style="left:643px;top:242px;width:55px;height:27px;line-height:27px;color:#3a3a3a;white-space:nowrap;">1.06</div><div class="a" style="left:699px;top:240px;width:56px;height:27px;background:#d7d6d3;"></div><div class="a" style="left:699px;top:267px;width:57px;height:1px;background:#a5a2a0;"></div><div class="a" style="left:755px;top:240px;width:1px;height:28px;background:#a5a2a0;"></div><div class="t td" style="left:699px;top:242px;width:56px;height:27px;line-height:27px;color:#3a3a3a;white-space:nowrap;">10.20</div><div class="a" style="left:756px;top:240px;width:55px;height:27px;background:#d7d6d3;"></div><div class="a" style="left:756px;top:267px;width:56px;height:1px;background:#a5a2a0;"></div><div class="a" style="left:811px;top:240px;width:1px;height:28px;background:#a5a2a0;"></div><div class="t td" style="left:756px;top:242px;width:55px;height:27px;line-height:27px;color:#3a3a3a;white-space:nowrap;">22.54</div><div class="a" style="left:812px;top:240px;width:34px;height:27px;background:#ddd8d6;"></div><div class="a" style="left:812px;top:267px;width:35px;height:1px;background:#a5a2a0;"></div><div class="a" style="left:846px;top:240px;width:1px;height:28px;background:#a5a2a0;"></div><div class="t td" style="left:812px;top:242px;width:34px;height:27px;line-height:27px;color:#157d15;white-space:nowrap;"><i class="c">負</i></div><div class="a" style="left:847px;top:240px;width:34px;height:27px;background:#ddd8d6;"></div><div class="a" style="left:847px;top:267px;width:35px;height:1px;background:#a5a2a0;"></div><div class="a" style="left:881px;top:240px;width:1px;height:28px;background:#a5a2a0;"></div><div class="t td" style="left:847px;top:242px;width:34px;height:27px;line-height:27px;color:#157d15;white-space:nowrap;"><i class="c">輸</i></div><div class="a" style="left:882px;top:240px;width:41px;height:27px;background:#ddd8d6;"></div><div class="a" style="left:882px;top:267px;width:42px;height:1px;background:#a5a2a0;"></div><div class="t td" style="left:882px;top:242px;width:49px;height:27px;line-height:27px;color:#d00a0a;white-space:nowrap;"><i class="c">大</i></div><div class="a" style="left:23px;top:268px;width:1px;height:28px;background:#c9c3c1;"></div><div class="a" style="left:24px;top:268px;width:81px;height:27px;background:#bb1a45;"></div><div class="a" style="left:24px;top:295px;width:81px;height:1px;background:#cc5a78;"></div><div class="a" style="left:105px;top:268px;width:1px;height:28px;background:#cc5a78;"></div><div class="t ty" style="left:24px;top:270px;width:81px;height:27px;line-height:27px;color:#ffffff;white-space:nowrap;"><i class="c">欧女国联</i></div><div class="a" style="left:106px;top:268px;width:65px;height:27px;background:#e6e0de;"></div><div class="a" style="left:106px;top:295px;width:66px;height:1px;background:#a5a2a0;"></div><div class="a" style="left:171px;top:268px;width:1px;height:28px;background:#a5a2a0;"></div><div class="t td" style="left:106px;top:270px;width:65px;height:27px;line-height:27px;color:#3a3a3a;white-space:nowrap;">25-04-05</div><div class="a" style="left:172px;top:268px;width:120px;height:27px;background:#e6e0de;"></div><div class="a" style="left:172px;top:295px;width:121px;height:1px;background:#a5a2a0;"></div><div class="a" style="left:292px;top:268px;width:1px;height:28px;background:#a5a2a0;"></div><div class="t td" style="left:172px;top:270px;width:120px;height:27px;line-height:27px;color:#3a3a3a;white-space:nowrap;"><span style="color:#157d15"><i class="c">葡萄牙</i> (<i class="c">女</i>)</span></div><div class="a" style="left:293px;top:268px;width:78px;height:27px;background:#e6e0de;"></div><div class="a" style="left:293px;top:295px;width:79px;height:1px;background:#a5a2a0;"></div><div class="a" style="left:371px;top:268px;width:1px;height:28px;background:#a5a2a0;"></div><div class="t td" style="left:293px;top:270px;width:78px;height:27px;line-height:27px;color:#3a3a3a;white-space:nowrap;"><span style="color:#d00a0a">2-4</span>(1-3)</div><div class="a" style="left:372px;top:268px;width:33px;height:27px;background:#e6e0de;"></div><div class="a" style="left:372px;top:295px;width:34px;height:1px;background:#a5a2a0;"></div><div class="a" style="left:405px;top:268px;width:1px;height:28px;background:#a5a2a0;"></div><div class="t td" style="left:372px;top:270px;width:33px;height:27px;line-height:27px;color:#3a3a3a;white-space:nowrap;">1-4</div><div class="a" style="left:406px;top:268px;width:98px;height:27px;background:#e6e0de;"></div><div class="a" style="left:406px;top:295px;width:99px;height:1px;background:#a5a2a0;"></div><div class="a" style="left:504px;top:268px;width:1px;height:28px;background:#a5a2a0;"></div><div class="t td" style="left:406px;top:270px;width:98px;height:27px;line-height:27px;color:#3a3a3a;white-space:nowrap;"><span style="color:#3a3a3a"><i class="c">西班牙</i> (<i class="c">女</i>)</span></div><div class="a" style="left:505px;top:268px;width:39px;height:27px;background:#e6e0de;"></div><div class="a" style="left:505px;top:295px;width:40px;height:1px;background:#a5a2a0;"></div><div class="a" style="left:544px;top:268px;width:1px;height:28px;background:#a5a2a0;"></div><div class="t td" style="left:505px;top:270px;width:39px;height:27px;line-height:27px;color:#3a3a3a;white-space:nowrap;">0.95</div><div class="a" style="left:545px;top:268px;width:57px;height:27px;background:#e6e0de;"></div><div class="a" style="left:545px;top:295px;width:58px;height:1px;background:#a5a2a0;"></div><div class="a" style="left:602px;top:268px;width:1px;height:28px;background:#a5a2a0;"></div><div class="t td" style="left:545px;top:270px;width:57px;height:27px;line-height:27px;color:#3a3a3a;white-space:nowrap;"><span style="color:#d00a0a;position:relative;top:-2px;font-size:13px">*</span><i class="c">两球</i></div><div class="a" style="left:603px;top:268px;width:39px;height:27px;background:#e6e0de;"></div><div class="a" style="left:603px;top:295px;width:40px;height:1px;background:#a5a2a0;"></div><div class="a" style="left:642px;top:268px;width:1px;height:28px;background:#a5a2a0;"></div><div class="t td" style="left:603px;top:270px;width:39px;height:27px;line-height:27px;color:#3a3a3a;white-space:nowrap;">0.87</div><div class="a" style="left:643px;top:268px;width:55px;height:27px;background:#dddcd8;"></div><div class="a" style="left:643px;top:295px;width:56px;height:1px;background:#a5a2a0;"></div><div class="a" style="left:698px;top:268px;width:1px;height:28px;background:#a5a2a0;"></div><div class="t td" style="left:643px;top:270px;width:55px;height:27px;line-height:27px;color:#3a3a3a;white-space:nowrap;">14.60</div><div class="a" style="left:699px;top:268px;width:56px;height:27px;background:#dddcd8;"></div><div class="a" style="left:699px;top:295px;width:57px;height:1px;background:#a5a2a0;"></div><div class="a" style="left:755px;top:268px;width:1px;height:28px;background:#a5a2a0;"></div><div class="t td" style="left:699px;top:270px;width:56px;height:27px;line-height:27px;color:#3a3a3a;white-space:nowrap;">6.83</div><div class="a" style="left:756px;top:268px;width:55px;height:27px;background:#dddcd8;"></div><div class="a" style="left:756px;top:295px;width:56px;height:1px;background:#a5a2a0;"></div><div class="a" style="left:811px;top:268px;width:1px;height:28px;background:#a5a2a0;"></div><div class="t td" style="left:756px;top:270px;width:55px;height:27px;line-height:27px;color:#3a3a3a;white-space:nowrap;">1.15</div><div class="a" style="left:812px;top:268px;width:34px;height:27px;background:#e6e0de;"></div><div class="a" style="left:812px;top:295px;width:35px;height:1px;background:#a5a2a0;"></div><div class="a" style="left:846px;top:268px;width:1px;height:28px;background:#a5a2a0;"></div><div class="t td" style="left:812px;top:270px;width:34px;height:27px;line-height:27px;color:#157d15;white-space:nowrap;"><i class="c">負</i></div><div class="a" style="left:847px;top:268px;width:34px;height:27px;background:#e6e0de;"></div><div class="a" style="left:847px;top:295px;width:35px;height:1px;background:#a5a2a0;"></div><div class="a" style="left:881px;top:268px;width:1px;height:28px;background:#a5a2a0;"></div><div class="t td" style="left:847px;top:270px;width:34px;height:27px;line-height:27px;color:#0a0ab4;white-space:nowrap;"><i class="c">走</i></div><div class="a" style="left:882px;top:268px;width:41px;height:27px;background:#e6e0de;"></div><div class="a" style="left:882px;top:295px;width:42px;height:1px;background:#a5a2a0;"></div><div class="t td" style="left:882px;top:270px;width:49px;height:27px;line-height:27px;color:#d00a0a;white-space:nowrap;"><i class="c">大</i></div><div class="a" style="left:23px;top:296px;width:1px;height:28px;background:#c9c3c1;"></div><div class="a" style="left:24px;top:296px;width:81px;height:27px;background:#bb1a45;"></div><div class="a" style="left:24px;top:323px;width:81px;height:1px;background:#cc5a78;"></div><div class="a" style="left:105px;top:296px;width:1px;height:28px;background:#cc5a78;"></div><div class="t ty" style="left:24px;top:298px;width:81px;height:27px;line-height:27px;color:#ffffff;white-space:nowrap;"><i class="c">欧女国联</i></div><div class="a" style="left:106px;top:296px;width:65px;height:27px;background:#ddd8d6;"></div><div class="a" style="left:106px;top:323px;width:66px;height:1px;background:#a5a2a0;"></div><div class="a" style="left:171px;top:296px;width:1px;height:28px;background:#a5a2a0;"></div><div class="t td" style="left:106px;top:298px;width:65px;height:27px;line-height:27px;color:#3a3a3a;white-space:nowrap;">25-02-27</div><div class="a" style="left:172px;top:296px;width:120px;height:27px;background:#ddd8d6;"></div><div class="a" style="left:172px;top:323px;width:121px;height:1px;background:#a5a2a0;"></div><div class="a" style="left:292px;top:296px;width:1px;height:28px;background:#a5a2a0;"></div><div class="t td" style="left:172px;top:298px;width:120px;height:27px;line-height:27px;color:#3a3a3a;white-space:nowrap;"><span style="color:#3a3a3a"><i class="c">比利时</i> (<i class="c">女</i>)</span></div><div class="a" style="left:293px;top:296px;width:78px;height:27px;background:#ddd8d6;"></div><div class="a" style="left:293px;top:323px;width:79px;height:1px;background:#a5a2a0;"></div><div class="a" style="left:371px;top:296px;width:1px;height:28px;background:#a5a2a0;"></div><div class="t td" style="left:293px;top:298px;width:78px;height:27px;line-height:27px;color:#3a3a3a;white-space:nowrap;"><span style="color:#d00a0a">0-1</span>(0-0)</div><div class="a" style="left:372px;top:296px;width:33px;height:27px;background:#ddd8d6;"></div><div class="a" style="left:372px;top:323px;width:34px;height:1px;background:#a5a2a0;"></div><div class="a" style="left:405px;top:296px;width:1px;height:28px;background:#a5a2a0;"></div><div class="t td" style="left:372px;top:298px;width:33px;height:27px;line-height:27px;color:#3a3a3a;white-space:nowrap;">3-3</div><div class="a" style="left:406px;top:296px;width:98px;height:27px;background:#ddd8d6;"></div><div class="a" style="left:406px;top:323px;width:99px;height:1px;background:#a5a2a0;"></div><div class="a" style="left:504px;top:296px;width:1px;height:28px;background:#a5a2a0;"></div><div class="t td" style="left:406px;top:298px;width:98px;height:27px;line-height:27px;color:#3a3a3a;white-space:nowrap;"><span style="color:#157d15"><i class="c">葡萄牙</i> (<i class="c">女</i>)</span></div><div class="a" style="left:505px;top:296px;width:39px;height:27px;background:#ddd8d6;"></div><div class="a" style="left:505px;top:323px;width:40px;height:1px;background:#a5a2a0;"></div><div class="a" style="left:544px;top:296px;width:1px;height:28px;background:#a5a2a0;"></div><div class="t td" style="left:505px;top:298px;width:39px;height:27px;line-height:27px;color:#3a3a3a;white-space:nowrap;">0.97</div><div class="a" style="left:545px;top:296px;width:57px;height:27px;background:#ddd8d6;"></div><div class="a" style="left:545px;top:323px;width:58px;height:1px;background:#a5a2a0;"></div><div class="a" style="left:602px;top:296px;width:1px;height:28px;background:#a5a2a0;"></div><div class="t td" style="left:545px;top:298px;width:57px;height:27px;line-height:27px;color:#3a3a3a;white-space:nowrap;"><i class="c">平手</i></div><div class="a" style="left:603px;top:296px;width:39px;height:27px;background:#ddd8d6;"></div><div class="a" style="left:603px;top:323px;width:40px;height:1px;background:#a5a2a0;"></div><div class="a" style="left:642px;top:296px;width:1px;height:28px;background:#a5a2a0;"></div><div class="t td" style="left:603px;top:298px;width:39px;height:27px;line-height:27px;color:#3a3a3a;white-space:nowrap;">0.85</div><div class="a" style="left:643px;top:296px;width:55px;height:27px;background:#d7d6d3;"></div><div class="a" style="left:643px;top:323px;width:56px;height:1px;background:#a5a2a0;"></div><div class="a" style="left:698px;top:296px;width:1px;height:28px;background:#a5a2a0;"></div><div class="t td" style="left:643px;top:298px;width:55px;height:27px;line-height:27px;color:#3a3a3a;white-space:nowrap;">2.58</div><div class="a" style="left:699px;top:296px;width:56px;height:27px;background:#d7d6d3;"></div><div class="a" style="left:699px;top:323px;width:57px;height:1px;background:#a5a2a0;"></div><div class="a" style="left:755px;top:296px;width:1px;height:28px;background:#a5a2a0;"></div><div class="t td" style="left:699px;top:298px;width:56px;height:27px;line-height:27px;color:#3a3a3a;white-space:nowrap;">3.34</div><div class="a" style="left:756px;top:296px;width:55px;height:27px;background:#d7d6d3;"></div><div class="a" style="left:756px;top:323px;width:56px;height:1px;background:#a5a2a0;"></div><div class="a" style="left:811px;top:296px;width:1px;height:28px;background:#a5a2a0;"></div><div class="t td" style="left:756px;top:298px;width:55px;height:27px;line-height:27px;color:#3a3a3a;white-space:nowrap;">2.48</div><div class="a" style="left:812px;top:296px;width:34px;height:27px;background:#ddd8d6;"></div><div class="a" style="left:812px;top:323px;width:35px;height:1px;background:#a5a2a0;"></div><div class="a" style="left:846px;top:296px;width:1px;height:28px;background:#a5a2a0;"></div><div class="t td" style="left:812px;top:298px;width:34px;height:27px;line-height:27px;color:#d00a0a;white-space:nowrap;"><i class="c">勝</i></div><div class="a" style="left:847px;top:296px;width:34px;height:27px;background:#ddd8d6;"></div><div class="a" style="left:847px;top:323px;width:35px;height:1px;background:#a5a2a0;"></div><div class="a" style="left:881px;top:296px;width:1px;height:28px;background:#a5a2a0;"></div><div class="t td" style="left:847px;top:298px;width:34px;height:27px;line-height:27px;color:#d00a0a;white-space:nowrap;"><i class="c">赢</i></div><div class="a" style="left:882px;top:296px;width:41px;height:27px;background:#ddd8d6;"></div><div class="a" style="left:882px;top:323px;width:42px;height:1px;background:#a5a2a0;"></div><div class="t td" style="left:882px;top:298px;width:49px;height:27px;line-height:27px;color:#157d15;white-space:nowrap;"><i class="c">小</i></div><div class="a" style="left:23px;top:324px;width:1px;height:28px;background:#c9c3c1;"></div><div class="a" style="left:24px;top:324px;width:81px;height:27px;background:#bb1a45;"></div><div class="a" style="left:24px;top:351px;width:81px;height:1px;background:#cc5a78;"></div><div class="a" style="left:105px;top:324px;width:1px;height:28px;background:#cc5a78;"></div><div class="t ty" style="left:24px;top:326px;width:81px;height:27px;line-height:27px;color:#ffffff;white-space:nowrap;"><i class="c">欧女国联</i></div><div class="a" style="left:106px;top:324px;width:65px;height:27px;background:#e6e0de;"></div><div class="a" style="left:106px;top:351px;width:66px;height:1px;background:#a5a2a0;"></div><div class="a" style="left:171px;top:324px;width:1px;height:28px;background:#a5a2a0;"></div><div class="t td" style="left:106px;top:326px;width:65px;height:27px;line-height:27px;color:#3a3a3a;white-space:nowrap;">25-02-22</div><div class="a" style="left:172px;top:324px;width:120px;height:27px;background:#e6e0de;"></div><div class="a" style="left:172px;top:351px;width:121px;height:1px;background:#a5a2a0;"></div><div class="a" style="left:292px;top:324px;width:1px;height:28px;background:#a5a2a0;"></div><div class="t td" style="left:172px;top:326px;width:120px;height:27px;line-height:27px;color:#3a3a3a;white-space:nowrap;"><span style="color:#157d15"><i class="c">葡萄牙</i> (<i class="c">女</i>)</span></div><div class="a" style="left:293px;top:324px;width:78px;height:27px;background:#e6e0de;"></div><div class="a" style="left:293px;top:351px;width:79px;height:1px;background:#a5a2a0;"></div><div class="a" style="left:371px;top:324px;width:1px;height:28px;background:#a5a2a0;"></div><div class="t td" style="left:293px;top:326px;width:78px;height:27px;line-height:27px;color:#3a3a3a;white-space:nowrap;"><span style="color:#d00a0a">1-1</span>(0-1)</div><div class="a" style="left:372px;top:324px;width:33px;height:27px;background:#e6e0de;"></div><div class="a" style="left:372px;top:351px;width:34px;height:1px;background:#a5a2a0;"></div><div class="a" style="left:405px;top:324px;width:1px;height:28px;background:#a5a2a0;"></div><div class="t td" style="left:372px;top:326px;width:33px;height:27px;line-height:27px;color:#3a3a3a;white-space:nowrap;">2-9</div><div class="a" style="left:406px;top:324px;width:98px;height:27px;background:#e6e0de;"></div><div class="a" style="left:406px;top:351px;width:99px;height:1px;background:#a5a2a0;"></div><div class="a" style="left:504px;top:324px;width:1px;height:28px;background:#a5a2a0;"></div><div class="t td" style="left:406px;top:326px;width:98px;height:27px;line-height:27px;color:#3a3a3a;white-space:nowrap;"><span style="color:#3a3a3a"><i class="c">英格兰</i> (<i class="c">女</i>)</span></div><div class="a" style="left:505px;top:324px;width:39px;height:27px;background:#e6e0de;"></div><div class="a" style="left:505px;top:351px;width:40px;height:1px;background:#a5a2a0;"></div><div class="a" style="left:544px;top:324px;width:1px;height:28px;background:#a5a2a0;"></div><div class="t td" style="left:505px;top:326px;width:39px;height:27px;line-height:27px;color:#3a3a3a;white-space:nowrap;">0.95</div><div class="a" style="left:545px;top:324px;width:57px;height:27px;background:#e6e0de;"></div><div class="a" style="left:545px;top:351px;width:58px;height:1px;background:#a5a2a0;"></div><div class="a" style="left:602px;top:324px;width:1px;height:28px;background:#a5a2a0;"></div><div class="t td" style="left:545px;top:326px;width:57px;height:27px;line-height:27px;color:#3a3a3a;white-space:nowrap;"><span style="color:#d00a0a;position:relative;top:-2px;font-size:13px">*</span><i class="c">一球</i></div><div class="a" style="left:603px;top:324px;width:39px;height:27px;background:#e6e0de;"></div><div class="a" style="left:603px;top:351px;width:40px;height:1px;background:#a5a2a0;"></div><div class="a" style="left:642px;top:324px;width:1px;height:28px;background:#a5a2a0;"></div><div class="t td" style="left:603px;top:326px;width:39px;height:27px;line-height:27px;color:#3a3a3a;white-space:nowrap;">0.87</div><div class="a" style="left:643px;top:324px;width:55px;height:27px;background:#dddcd8;"></div><div class="a" style="left:643px;top:351px;width:56px;height:1px;background:#a5a2a0;"></div><div class="a" style="left:698px;top:324px;width:1px;height:28px;background:#a5a2a0;"></div><div class="t td" style="left:643px;top:326px;width:55px;height:27px;line-height:27px;color:#3a3a3a;white-space:nowrap;">5.76</div><div class="a" style="left:699px;top:324px;width:56px;height:27px;background:#dddcd8;"></div><div class="a" style="left:699px;top:351px;width:57px;height:1px;background:#a5a2a0;"></div><div class="a" style="left:755px;top:324px;width:1px;height:28px;background:#a5a2a0;"></div><div class="t td" style="left:699px;top:326px;width:56px;height:27px;line-height:27px;color:#3a3a3a;white-space:nowrap;">4.10</div><div class="a" style="left:756px;top:324px;width:55px;height:27px;background:#dddcd8;"></div><div class="a" style="left:756px;top:351px;width:56px;height:1px;background:#a5a2a0;"></div><div class="a" style="left:811px;top:324px;width:1px;height:28px;background:#a5a2a0;"></div><div class="t td" style="left:756px;top:326px;width:55px;height:27px;line-height:27px;color:#3a3a3a;white-space:nowrap;">1.52</div><div class="a" style="left:812px;top:324px;width:34px;height:27px;background:#e6e0de;"></div><div class="a" style="left:812px;top:351px;width:35px;height:1px;background:#a5a2a0;"></div><div class="a" style="left:846px;top:324px;width:1px;height:28px;background:#a5a2a0;"></div><div class="t td" style="left:812px;top:326px;width:34px;height:27px;line-height:27px;color:#0a0ab4;white-space:nowrap;"><i class="c">平</i></div><div class="a" style="left:847px;top:324px;width:34px;height:27px;background:#e6e0de;"></div><div class="a" style="left:847px;top:351px;width:35px;height:1px;background:#a5a2a0;"></div><div class="a" style="left:881px;top:324px;width:1px;height:28px;background:#a5a2a0;"></div><div class="t td" style="left:847px;top:326px;width:34px;height:27px;line-height:27px;color:#d00a0a;white-space:nowrap;"><i class="c">赢</i></div><div class="a" style="left:882px;top:324px;width:41px;height:27px;background:#e6e0de;"></div><div class="a" style="left:882px;top:351px;width:42px;height:1px;background:#a5a2a0;"></div><div class="t td" style="left:882px;top:326px;width:49px;height:27px;line-height:27px;color:#157d15;white-space:nowrap;"><i class="c">小</i></div><div class="a" style="left:23px;top:352px;width:1px;height:28px;background:#c9c3c1;"></div><div class="a" style="left:24px;top:352px;width:81px;height:27px;background:#0c9348;"></div><div class="a" style="left:24px;top:379px;width:81px;height:1px;background:#5ab888;"></div><div class="a" style="left:105px;top:352px;width:1px;height:28px;background:#5ab888;"></div><div class="t ty" style="left:24px;top:354px;width:81px;height:27px;line-height:27px;color:#ffffff;white-space:nowrap;"><i class="c">女欧国杯外</i></div><div class="a" style="left:106px;top:352px;width:65px;height:27px;background:#ddd8d6;"></div><div class="a" style="left:106px;top:379px;width:66px;height:1px;background:#a5a2a0;"></div><div class="a" style="left:171px;top:352px;width:1px;height:28px;background:#a5a2a0;"></div><div class="t td" style="left:106px;top:354px;width:65px;height:27px;line-height:27px;color:#3a3a3a;white-space:nowrap;">24-12-04</div><div class="a" style="left:172px;top:352px;width:120px;height:27px;background:#ddd8d6;"></div><div class="a" style="left:172px;top:379px;width:121px;height:1px;background:#a5a2a0;"></div><div class="a" style="left:292px;top:352px;width:1px;height:28px;background:#a5a2a0;"></div><div class="t td" style="left:172px;top:354px;width:120px;height:27px;line-height:27px;color:#3a3a3a;white-space:nowrap;"><span style="color:#3a3a3a"><i class="c">捷克</i> (<i class="c">女</i>)</span></div><div class="a" style="left:293px;top:352px;width:78px;height:27px;background:#ddd8d6;"></div><div class="a" style="left:293px;top:379px;width:79px;height:1px;background:#a5a2a0;"></div><div class="a" style="left:371px;top:352px;width:1px;height:28px;background:#a5a2a0;"></div><div class="t td" style="left:293px;top:354px;width:78px;height:27px;line-height:27px;color:#3a3a3a;white-space:nowrap;"><span style="color:#d00a0a">1-2</span>(1-1)</div><div class="a" style="left:372px;top:352px;width:33px;height:27px;background:#ddd8d6;"></div><div class="a" style="left:372px;top:379px;width:34px;height:1px;background:#a5a2a0;"></div><div class="a" style="left:405px;top:352px;width:1px;height:28px;background:#a5a2a0;"></div><div class="t td" style="left:372px;top:354px;width:33px;height:27px;line-height:27px;color:#3a3a3a;white-space:nowrap;">2-4</div><div class="a" style="left:406px;top:352px;width:98px;height:27px;background:#ddd8d6;"></div><div class="a" style="left:406px;top:379px;width:99px;height:1px;background:#a5a2a0;"></div><div class="a" style="left:504px;top:352px;width:1px;height:28px;background:#a5a2a0;"></div><div class="t td" style="left:406px;top:354px;width:98px;height:27px;line-height:27px;color:#3a3a3a;white-space:nowrap;"><span style="color:#157d15"><i class="c">葡萄牙</i> (<i class="c">女</i>)</span></div><div class="a" style="left:505px;top:352px;width:39px;height:27px;background:#ddd8d6;"></div><div class="a" style="left:505px;top:379px;width:40px;height:1px;background:#a5a2a0;"></div><div class="a" style="left:544px;top:352px;width:1px;height:28px;background:#a5a2a0;"></div><div class="t td" style="left:505px;top:354px;width:39px;height:27px;line-height:27px;color:#3a3a3a;white-space:nowrap;">0.85</div><div class="a" style="left:545px;top:352px;width:57px;height:27px;background:#ddd8d6;"></div><div class="a" style="left:545px;top:379px;width:58px;height:1px;background:#a5a2a0;"></div><div class="a" style="left:602px;top:352px;width:1px;height:28px;background:#a5a2a0;"></div><div class="t td" style="left:545px;top:354px;width:57px;height:27px;line-height:27px;color:#3a3a3a;white-space:nowrap;"><span style="color:#d00a0a;position:relative;top:-2px;font-size:13px">*</span><i class="c">半</i>/<i class="c">一</i></div><div class="a" style="left:603px;top:352px;width:39px;height:27px;background:#ddd8d6;"></div><div class="a" style="left:603px;top:379px;width:40px;height:1px;background:#a5a2a0;"></div><div class="a" style="left:642px;top:352px;width:1px;height:28px;background:#a5a2a0;"></div><div class="t td" style="left:603px;top:354px;width:39px;height:27px;line-height:27px;color:#3a3a3a;white-space:nowrap;">0.97</div><div class="a" style="left:643px;top:352px;width:55px;height:27px;background:#d7d6d3;"></div><div class="a" style="left:643px;top:379px;width:56px;height:1px;background:#a5a2a0;"></div><div class="a" style="left:698px;top:352px;width:1px;height:28px;background:#a5a2a0;"></div><div class="t td" style="left:643px;top:354px;width:55px;height:27px;line-height:27px;color:#3a3a3a;white-space:nowrap;">3.95</div><div class="a" style="left:699px;top:352px;width:56px;height:27px;background:#d7d6d3;"></div><div class="a" style="left:699px;top:379px;width:57px;height:1px;background:#a5a2a0;"></div><div class="a" style="left:755px;top:352px;width:1px;height:28px;background:#a5a2a0;"></div><div class="t td" style="left:699px;top:354px;width:56px;height:27px;line-height:27px;color:#3a3a3a;white-space:nowrap;">3.50</div><div class="a" style="left:756px;top:352px;width:55px;height:27px;background:#d7d6d3;"></div><div class="a" style="left:756px;top:379px;width:56px;height:1px;background:#a5a2a0;"></div><div class="a" style="left:811px;top:352px;width:1px;height:28px;background:#a5a2a0;"></div><div class="t td" style="left:756px;top:354px;width:55px;height:27px;line-height:27px;color:#3a3a3a;white-space:nowrap;">1.80</div><div class="a" style="left:812px;top:352px;width:34px;height:27px;background:#ddd8d6;"></div><div class="a" style="left:812px;top:379px;width:35px;height:1px;background:#a5a2a0;"></div><div class="a" style="left:846px;top:352px;width:1px;height:28px;background:#a5a2a0;"></div><div class="t td" style="left:812px;top:354px;width:34px;height:27px;line-height:27px;color:#d00a0a;white-space:nowrap;"><i class="c">勝</i></div><div class="a" style="left:847px;top:352px;width:34px;height:27px;background:#ddd8d6;"></div><div class="a" style="left:847px;top:379px;width:35px;height:1px;background:#a5a2a0;"></div><div class="a" style="left:881px;top:352px;width:1px;height:28px;background:#a5a2a0;"></div><div class="t td" style="left:847px;top:354px;width:34px;height:27px;line-height:27px;color:#d00a0a;white-space:nowrap;"><i class="c">赢</i></div><div class="a" style="left:882px;top:352px;width:41px;height:27px;background:#ddd8d6;"></div><div class="a" style="left:882px;top:379px;width:42px;height:1px;background:#a5a2a0;"></div><div class="t td" style="left:882px;top:354px;width:49px;height:27px;line-height:27px;color:#d00a0a;white-space:nowrap;"><i class="c">大</i></div><div class="a" style="left:23px;top:380px;width:900px;height:27px;background:#e3dfdc;"></div><div class="a" style="left:23px;top:407px;width:900px;height:1px;background:#9c9a9a;"></div><div class="t" style="left:315px;top:382px;width:140px;height:27px;line-height:27px;color:#3a3a3a;text-align:left;white-space:nowrap;"><i class="c">近</i><span style="color:#e03030">10</span><i class="c">场</i>,<i class="c">胜</i>2<i class="c">平</i>3<i class="c">负</i>5, <i class="c">胜率</i>:</div><div class="a" style="left:447px;top:384px;width:35px;height:18px;background:#0d6e0d;color:#e0f2d8;font-size:12.5px;line-height:20px;text-align:center;">20%</div><div class="t" style="left:485px;top:382px;width:60px;height:27px;line-height:27px;color:#3a3a3a;text-align:left;letter-spacing:0.5px;"><i class="c">赢率</i>:<span style="color:#3030c0">40%</span></div><div class="t" style="left:543px;top:382px;width:50px;height:27px;line-height:27px;color:#3a3a3a;text-align:left;letter-spacing:0.5px;"><i class="c">大</i>:<span style="color:#3030c0">60%</span></div><div class="t" style="left:588px;top:382px;width:60px;height:27px;line-height:27px;color:#3a3a3a;text-align:left;letter-spacing:0.5px;"><i class="c">单率</i>:<span style="color:#3030c0">40%</span></div><div class="a" style="left:23px;top:408px;width:900px;height:25px;background:#c8c9cb;"></div><div class="a" style="left:23px;top:433px;width:900px;height:1px;background:#9c9a9a;"></div><div class="t" style="left:43px;top:410.5px;width:120px;height:25px;line-height:25px;color:#2a2a2a;font-weight:bold;font-size:12.5px;letter-spacing:0.4px;word-spacing:1.5px;text-align:left;"><i class="c">比利时</i> (<i class="c">女</i>)</div><div class="t" style="left:304px;top:410px;width:14px;height:25px;line-height:25px;color:#222;text-align:left;"><i class="c">近</i></div><div class="sel" style="left:321px;top:415px;width:34px;height:14px;line-height:14px;font-size:11px;"><span class="sl">10</span><svg class="chev" width="10" height="7" viewBox="0 0 10 7"><path d="M1.3 1.2 L5 4.9 L8.7 1.2" fill="none" stroke="#000" stroke-width="2.1"/></svg></div><div class="t" style="left:361px;top:410px;width:14px;height:25px;line-height:25px;color:#222;text-align:left;"><i class="c">场</i></div><div class="a" style="left:376px;top:417px;width:11px;height:11px;background:#e8e4e2;border:1px solid #777;border-radius:2px;"></div><div class="t" style="left:393px;top:410px;width:26px;height:25px;line-height:25px;color:#222;text-align:left;"><i class="c">同客</i></div><div class="a" style="left:421px;top:417px;width:13px;height:13px;background:#2066d2;border-radius:2px;box-shadow:inset 0 0 0 1px #1a52b0;"><svg width="13" height="13" viewBox="0 0 13 13" style="position:absolute;left:0;top:0"><path d="M2.6 6.6 L5.2 9.2 L10.2 3.4" fill="none" stroke="#f4f4f4" stroke-width="1.6"/></svg></div><div class="t" style="left:434px;top:410px;width:50px;height:25px;line-height:25px;color:#222;text-align:left;"><i class="c">女欧国杯</i></div><div class="a" style="left:482px;top:417px;width:13px;height:13px;background:#2066d2;border-radius:2px;box-shadow:inset 0 0 0 1px #1a52b0;"><svg width="13" height="13" viewBox="0 0 13 13" style="position:absolute;left:0;top:0"><path d="M2.6 6.6 L5.2 9.2 L10.2 3.4" fill="none" stroke="#f4f4f4" stroke-width="1.6"/></svg></div><div class="t" style="left:495px;top:410px;width:50px;height:25px;line-height:25px;color:#222;text-align:left;"><i class="c">国际友谊</i></div><div class="a" style="left:543px;top:417px;width:13px;height:13px;background:#2066d2;border-radius:2px;box-shadow:inset 0 0 0 1px #1a52b0;"><svg width="13" height="13" viewBox="0 0 13 13" style="position:absolute;left:0;top:0"><path d="M2.6 6.6 L5.2 9.2 L10.2 3.4" fill="none" stroke="#f4f4f4" stroke-width="1.6"/></svg></div><div class="t" style="left:556px;top:410px;width:50px;height:25px;line-height:25px;color:#222;text-align:left;"><i class="c">欧女国联</i></div><div class="a" style="left:604px;top:417px;width:13px;height:13px;background:#2066d2;border-radius:2px;box-shadow:inset 0 0 0 1px #1a52b0;"><svg width="13" height="13" viewBox="0 0 13 13" style="position:absolute;left:0;top:0"><path d="M2.6 6.6 L5.2 9.2 L10.2 3.4" fill="none" stroke="#f4f4f4" stroke-width="1.6"/></svg></div><div class="t" style="left:617px;top:410px;width:62px;height:25px;line-height:25px;color:#222;text-align:left;"><i class="c">女欧国杯外</i></div><div class="a" style="left:677px;top:417px;width:13px;height:13px;background:#2066d2;border-radius:2px;box-shadow:inset 0 0 0 1px #1a52b0;"><svg width="13" height="13" viewBox="0 0 13 13" style="position:absolute;left:0;top:0"><path d="M2.6 6.6 L5.2 9.2 L10.2 3.4" fill="none" stroke="#f4f4f4" stroke-width="1.6"/></svg></div><div class="t" style="left:690px;top:410px;width:50px;height:25px;line-height:25px;color:#222;text-align:left;"><i class="c">世女欧预</i></div><div class="a" style="left:23px;top:434px;width:900px;height:40px;background:#cbcacc;"></div><div class="a" style="left:23px;top:474px;width:900px;height:1px;background:#9c9a9a;"></div><div class="t" style="left:24px;top:436px;width:68px;height:40px;line-height:40px;color:#2e2e2e;font-size:13px;"><i class="c">类型</i></div><div class="t" style="left:93px;top:436px;width:67px;height:40px;line-height:40px;color:#2e2e2e;font-size:13px;"><i class="c">日期</i></div><div class="t" style="left:161px;top:436px;width:114px;height:40px;line-height:40px;color:#2e2e2e;font-size:13px;"><i class="c">主场</i></div><div class="t" style="left:276px;top:436px;width:80px;height:40px;line-height:40px;color:#2e2e2e;font-size:13px;"><i class="c">比分</i>(<i class="c">半场</i>)</div><div class="t" style="left:357px;top:436px;width:35px;height:40px;line-height:40px;color:#2e2e2e;font-size:13px;"><i class="c">角球</i></div><div class="t" style="left:393px;top:436px;width:85px;height:40px;line-height:40px;color:#2e2e2e;font-size:13px;"><i class="c">客场</i></div><div class="a" style="left:92px;top:434px;width:1px;height:40px;background:#9c9a9a;"></div><div class="a" style="left:160px;top:434px;width:1px;height:40px;background:#9c9a9a;"></div><div class="a" style="left:275px;top:434px;width:1px;height:40px;background:#9c9a9a;"></div><div class="a" style="left:356px;top:434px;width:1px;height:40px;background:#9c9a9a;"></div><div class="a" style="left:392px;top:434px;width:1px;height:40px;background:#9c9a9a;"></div><div class="a" style="left:478px;top:434px;width:1px;height:40px;background:#9c9a9a;"></div><div class="a" style="left:632px;top:434px;width:1px;height:40px;background:#9c9a9a;"></div><div class="a" style="left:807px;top:434px;width:1px;height:40px;background:#9c9a9a;"></div><div class="a" style="left:478px;top:456px;width:445px;height:1px;background:#b3b1b1;"></div><div class="a" style="left:513px;top:457px;width:1px;height:17px;background:#b3b1b1;"></div><div class="a" style="left:597px;top:457px;width:1px;height:17px;background:#b3b1b1;"></div><div class="a" style="left:690px;top:457px;width:1px;height:17px;background:#b3b1b1;"></div><div class="a" style="left:749px;top:457px;width:1px;height:17px;background:#b3b1b1;"></div><div class="a" style="left:843px;top:457px;width:1px;height:17px;background:#b3b1b1;"></div><div class="a" style="left:880px;top:457px;width:1px;height:17px;background:#b3b1b1;"></div><div class="t" style="left:479px;top:459px;width:34px;height:17px;line-height:17px;color:#2e2e2e;white-space:nowrap;font-size:13px;"><i class="c">主</i></div><div class="t" style="left:514px;top:459px;width:83px;height:17px;line-height:17px;color:#2e2e2e;white-space:nowrap;font-size:13px;"><i class="c">盘口</i></div><div class="t" style="left:598px;top:459px;width:34px;height:17px;line-height:17px;color:#2e2e2e;white-space:nowrap;font-size:13px;"><i class="c">客</i></div><div class="t" style="left:633px;top:459px;width:57px;height:17px;line-height:17px;color:#2e2e2e;white-space:nowrap;font-size:13px;"><i class="c">主</i></div><div class="t" style="left:691px;top:459px;width:58px;height:17px;line-height:17px;color:#2e2e2e;white-space:nowrap;font-size:13px;"><i class="c">和</i></div><div class="t" style="left:750px;top:459px;width:57px;height:17px;line-height:17px;color:#2e2e2e;white-space:nowrap;font-size:13px;"><i class="c">客</i></div><div class="t" style="left:808px;top:459px;width:35px;height:17px;line-height:17px;color:#2e2e2e;white-space:nowrap;font-size:13px;"><i class="c">胜负</i></div><div class="t" style="left:844px;top:459px;width:36px;height:17px;line-height:17px;color:#2e2e2e;white-space:nowrap;font-size:13px;"><i class="c">让球</i></div><div class="t" style="left:881px;top:459px;width:50px;height:17px;line-height:17px;color:#2e2e2e;white-space:nowrap;font-size:13px;"><i class="c">进球数</i></div><div class="sel" style="left:504px;top:435px;width:58px;height:18px;line-height:18px;font-size:12px;"><span class="sl">Crow*</span><svg class="chev" width="10" height="7" viewBox="0 0 10 7"><path d="M1.3 1.2 L5 4.9 L8.7 1.2" fill="none" stroke="#000" stroke-width="2.1"/></svg></div><div class="sel" style="left:572px;top:435px;width:33px;height:18px;line-height:18px;font-size:12px;"><span class="sl"><i class="c">终</i></span><svg class="chev" width="10" height="7" viewBox="0 0 10 7"><path d="M1.3 1.2 L5 4.9 L8.7 1.2" fill="none" stroke="#000" stroke-width="2.1"/></svg></div><div class="sel" style="left:656px;top:435px;width:82px;height:18px;line-height:18px;font-size:12px;"><span class="sl"><i class="c">胜平负均值</i></span><svg class="chev" width="10" height="7" viewBox="0 0 10 7"><path d="M1.3 1.2 L5 4.9 L8.7 1.2" fill="none" stroke="#000" stroke-width="2.1"/></svg></div><div class="sel" style="left:748px;top:435px;width:34px;height:18px;line-height:18px;font-size:12px;"><span class="sl"><i class="c">终</i></span><svg class="chev" width="10" height="7" viewBox="0 0 10 7"><path d="M1.3 1.2 L5 4.9 L8.7 1.2" fill="none" stroke="#000" stroke-width="2.1"/></svg></div><div class="sel" style="left:846px;top:435px;width:46px;height:18px;line-height:18px;font-size:12px;"><span class="sl"><i class="c">全场</i></span><svg class="chev" width="10" height="7" viewBox="0 0 10 7"><path d="M1.3 1.2 L5 4.9 L8.7 1.2" fill="none" stroke="#000" stroke-width="2.1"/></svg></div><div class="a" style="left:23px;top:475px;width:1px;height:28px;background:#c9c3c1;"></div><div class="a" style="left:24px;top:475px;width:68px;height:27px;background:#e65c00;"></div><div class="a" style="left:24px;top:502px;width:68px;height:1px;background:#ec8a50;"></div><div class="a" style="left:92px;top:475px;width:1px;height:28px;background:#ec8a50;"></div><div class="t ty" style="left:24px;top:477px;width:68px;height:27px;line-height:27px;color:#ffffff;white-space:nowrap;"><i class="c">女欧国杯</i></div><div class="a" style="left:93px;top:475px;width:67px;height:27px;background:#e6e0de;"></div><div class="a" style="left:93px;top:502px;width:68px;height:1px;background:#a5a2a0;"></div><div class="a" style="left:160px;top:475px;width:1px;height:28px;background:#a5a2a0;"></div><div class="t td" style="left:93px;top:477px;width:67px;height:27px;line-height:27px;color:#3a3a3a;white-space:nowrap;">25-07-08</div><div class="a" style="left:161px;top:475px;width:114px;height:27px;background:#e6e0de;"></div><div class="a" style="left:161px;top:502px;width:115px;height:1px;background:#a5a2a0;"></div><div class="a" style="left:275px;top:475px;width:1px;height:28px;background:#a5a2a0;"></div><div class="t td" style="left:161px;top:477px;width:114px;height:27px;line-height:27px;color:#3a3a3a;white-space:nowrap;"><span style="color:#3a3a3a"><i class="c">西班牙</i> (<i class="c">女</i>)(<i class="c">中</i>)</span></div><div class="a" style="left:276px;top:475px;width:80px;height:27px;background:#e6e0de;"></div><div class="a" style="left:276px;top:502px;width:81px;height:1px;background:#a5a2a0;"></div><div class="a" style="left:356px;top:475px;width:1px;height:28px;background:#a5a2a0;"></div><div class="t td" style="left:276px;top:477px;width:80px;height:27px;line-height:27px;color:#3a3a3a;white-space:nowrap;"><span style="color:#d00a0a">6-2</span>(2-1)</div><div class="a" style="left:357px;top:475px;width:35px;height:27px;background:#e6e0de;"></div><div class="a" style="left:357px;top:502px;width:36px;height:1px;background:#a5a2a0;"></div><div class="a" style="left:392px;top:475px;width:1px;height:28px;background:#a5a2a0;"></div><div class="t td" style="left:357px;top:477px;width:35px;height:27px;line-height:27px;color:#3a3a3a;white-space:nowrap;">11-1</div><div class="a" style="left:393px;top:475px;width:85px;height:27px;background:#e6e0de;"></div><div class="a" style="left:393px;top:502px;width:86px;height:1px;background:#a5a2a0;"></div><div class="a" style="left:478px;top:475px;width:1px;height:28px;background:#a5a2a0;"></div><div class="t td" style="left:393px;top:477px;width:85px;height:27px;line-height:27px;color:#3a3a3a;white-space:nowrap;"><span style="color:#157d15"><i class="c">比利时</i> (<i class="c">女</i>)</span></div><div class="a" style="left:479px;top:475px;width:34px;height:27px;background:#e6e0de;"></div><div class="a" style="left:479px;top:502px;width:35px;height:1px;background:#a5a2a0;"></div><div class="a" style="left:513px;top:475px;width:1px;height:28px;background:#a5a2a0;"></div><div class="t td" style="left:479px;top:477px;width:34px;height:27px;line-height:27px;color:#3a3a3a;white-space:nowrap;">0.96</div><div class="a" style="left:514px;top:475px;width:83px;height:27px;background:#e6e0de;"></div><div class="a" style="left:514px;top:502px;width:84px;height:1px;background:#a5a2a0;"></div><div class="a" style="left:597px;top:475px;width:1px;height:28px;background:#a5a2a0;"></div><div class="t td" style="left:514px;top:477px;width:83px;height:27px;line-height:27px;color:#3a3a3a;white-space:nowrap;"><i class="c">三</i>/<i class="c">三球半</i></div><div class="a" style="left:598px;top:475px;width:34px;height:27px;background:#e6e0de;"></div><div class="a" style="left:598px;top:502px;width:35px;height:1px;background:#a5a2a0;"></div><div class="a" style="left:632px;top:475px;width:1px;height:28px;background:#a5a2a0;"></div><div class="t td" style="left:598px;top:477px;width:34px;height:27px;line-height:27px;color:#3a3a3a;white-space:nowrap;">0.90</div><div class="a" style="left:633px;top:475px;width:57px;height:27px;background:#dddcd8;"></div><div class="a" style="left:633px;top:502px;width:58px;height:1px;background:#a5a2a0;"></div><div class="a" style="left:690px;top:475px;width:1px;height:28px;background:#a5a2a0;"></div><div class="t td" style="left:633px;top:477px;width:57px;height:27px;line-height:27px;color:#3a3a3a;white-space:nowrap;">1.04</div><div class="a" style="left:691px;top:475px;width:58px;height:27px;background:#dddcd8;"></div><div class="a" style="left:691px;top:502px;width:59px;height:1px;background:#a5a2a0;"></div><div class="a" style="left:749px;top:475px;width:1px;height:28px;background:#a5a2a0;"></div><div class="t td" style="left:691px;top:477px;width:58px;height:27px;line-height:27px;color:#3a3a3a;white-space:nowrap;">14.03</div><div class="a" style="left:750px;top:475px;width:57px;height:27px;background:#dddcd8;"></div><div class="a" style="left:750px;top:502px;width:58px;height:1px;background:#a5a2a0;"></div><div class="a" style="left:807px;top:475px;width:1px;height:28px;background:#a5a2a0;"></div><div class="t td" style="left:750px;top:477px;width:57px;height:27px;line-height:27px;color:#3a3a3a;white-space:nowrap;">30.35</div><div class="a" style="left:808px;top:475px;width:35px;height:27px;background:#e6e0de;"></div><div class="a" style="left:808px;top:502px;width:36px;height:1px;background:#a5a2a0;"></div><div class="a" style="left:843px;top:475px;width:1px;height:28px;background:#a5a2a0;"></div><div class="t td" style="left:808px;top:477px;width:35px;height:27px;line-height:27px;color:#157d15;white-space:nowrap;"><i class="c">負</i></div><div class="a" style="left:844px;top:475px;width:36px;height:27px;background:#e6e0de;"></div><div class="a" style="left:844px;top:502px;width:37px;height:1px;background:#a5a2a0;"></div><div class="a" style="left:880px;top:475px;width:1px;height:28px;background:#a5a2a0;"></div><div class="t td" style="left:844px;top:477px;width:36px;height:27px;line-height:27px;color:#157d15;white-space:nowrap;"><i class="c">輸</i></div><div class="a" style="left:881px;top:475px;width:42px;height:27px;background:#e6e0de;"></div><div class="a" style="left:881px;top:502px;width:43px;height:1px;background:#a5a2a0;"></div><div class="t td" style="left:881px;top:477px;width:50px;height:27px;line-height:27px;color:#d00a0a;white-space:nowrap;"><i class="c">大</i></div><div class="a" style="left:23px;top:503px;width:1px;height:28px;background:#c9c3c1;"></div><div class="a" style="left:24px;top:503px;width:68px;height:27px;background:#e65c00;"></div><div class="a" style="left:24px;top:530px;width:68px;height:1px;background:#ec8a50;"></div><div class="a" style="left:92px;top:503px;width:1px;height:28px;background:#ec8a50;"></div><div class="t ty" style="left:24px;top:505px;width:68px;height:27px;line-height:27px;color:#ffffff;white-space:nowrap;"><i class="c">女欧国杯</i></div><div class="a" style="left:93px;top:503px;width:67px;height:27px;background:#ddd8d6;"></div><div class="a" style="left:93px;top:530px;width:68px;height:1px;background:#a5a2a0;"></div><div class="a" style="left:160px;top:503px;width:1px;height:28px;background:#a5a2a0;"></div><div class="t td" style="left:93px;top:505px;width:67px;height:27px;line-height:27px;color:#3a3a3a;white-space:nowrap;">25-07-04</div><div class="a" style="left:161px;top:503px;width:114px;height:27px;background:#ddd8d6;"></div><div class="a" style="left:161px;top:530px;width:115px;height:1px;background:#a5a2a0;"></div><div class="a" style="left:275px;top:503px;width:1px;height:28px;background:#a5a2a0;"></div><div class="t td" style="left:161px;top:505px;width:114px;height:27px;line-height:27px;color:#3a3a3a;white-space:nowrap;"><span style="color:#157d15"><i class="c">比利时</i> (<i class="c">女</i>)(<i class="c">中</i>)</span></div><div class="a" style="left:276px;top:503px;width:80px;height:27px;background:#ddd8d6;"></div><div class="a" style="left:276px;top:530px;width:81px;height:1px;background:#a5a2a0;"></div><div class="a" style="left:356px;top:503px;width:1px;height:28px;background:#a5a2a0;"></div><div class="t td" style="left:276px;top:505px;width:80px;height:27px;line-height:27px;color:#3a3a3a;white-space:nowrap;"><span style="color:#d00a0a">0-1</span>(0-1)</div><div class="a" style="left:357px;top:503px;width:35px;height:27px;background:#ddd8d6;"></div><div class="a" style="left:357px;top:530px;width:36px;height:1px;background:#a5a2a0;"></div><div class="a" style="left:392px;top:503px;width:1px;height:28px;background:#a5a2a0;"></div><div class="t td" style="left:357px;top:505px;width:35px;height:27px;line-height:27px;color:#3a3a3a;white-space:nowrap;">4-5</div><div class="a" style="left:393px;top:503px;width:85px;height:27px;background:#ddd8d6;"></div><div class="a" style="left:393px;top:530px;width:86px;height:1px;background:#a5a2a0;"></div><div class="a" style="left:478px;top:503px;width:1px;height:28px;background:#a5a2a0;"></div><div class="t td" style="left:393px;top:505px;width:85px;height:27px;line-height:27px;color:#3a3a3a;white-space:nowrap;"><span style="color:#3a3a3a"><i class="c">意大利</i> (<i class="c">女</i>)</span></div><div class="a" style="left:479px;top:503px;width:34px;height:27px;background:#ddd8d6;"></div><div class="a" style="left:479px;top:530px;width:35px;height:1px;background:#a5a2a0;"></div><div class="a" style="left:513px;top:503px;width:1px;height:28px;background:#a5a2a0;"></div><div class="t td" style="left:479px;top:505px;width:34px;height:27px;line-height:27px;color:#3a3a3a;white-space:nowrap;">0.90</div><div class="a" style="left:514px;top:503px;width:83px;height:27px;background:#ddd8d6;"></div><div class="a" style="left:514px;top:530px;width:84px;height:1px;background:#a5a2a0;"></div><div class="a" style="left:597px;top:503px;width:1px;height:28px;background:#a5a2a0;"></div><div class="t td" style="left:514px;top:505px;width:83px;height:27px;line-height:27px;color:#3a3a3a;white-space:nowrap;"><span style="color:#d00a0a;position:relative;top:-2px;font-size:13px">*</span><i class="c">一球</i></div><div class="a" style="left:598px;top:503px;width:34px;height:27px;background:#ddd8d6;"></div><div class="a" style="left:598px;top:530px;width:35px;height:1px;background:#a5a2a0;"></div><div class="a" style="left:632px;top:503px;width:1px;height:28px;background:#a5a2a0;"></div><div class="t td" style="left:598px;top:505px;width:34px;height:27px;line-height:27px;color:#3a3a3a;white-space:nowrap;">0.92</div><div class="a" style="left:633px;top:503px;width:57px;height:27px;background:#d7d6d3;"></div><div class="a" style="left:633px;top:530px;width:58px;height:1px;background:#a5a2a0;"></div><div class="a" style="left:690px;top:503px;width:1px;height:28px;background:#a5a2a0;"></div><div class="t td" style="left:633px;top:505px;width:57px;height:27px;line-height:27px;color:#3a3a3a;white-space:nowrap;">5.36</div><div class="a" style="left:691px;top:503px;width:58px;height:27px;background:#d7d6d3;"></div><div class="a" style="left:691px;top:530px;width:59px;height:1px;background:#a5a2a0;"></div><div class="a" style="left:749px;top:503px;width:1px;height:28px;background:#a5a2a0;"></div><div class="t td" style="left:691px;top:505px;width:58px;height:27px;line-height:27px;color:#3a3a3a;white-space:nowrap;">4.13</div><div class="a" style="left:750px;top:503px;width:57px;height:27px;background:#d7d6d3;"></div><div class="a" style="left:750px;top:530px;width:58px;height:1px;background:#a5a2a0;"></div><div class="a" style="left:807px;top:503px;width:1px;height:28px;background:#a5a2a0;"></div><div class="t td" style="left:750px;top:505px;width:57px;height:27px;line-height:27px;color:#3a3a3a;white-space:nowrap;">1.56</div><div class="a" style="left:808px;top:503px;width:35px;height:27px;background:#ddd8d6;"></div><div class="a" style="left:808px;top:530px;width:36px;height:1px;background:#a5a2a0;"></div><div class="a" style="left:843px;top:503px;width:1px;height:28px;background:#a5a2a0;"></div><div class="t td" style="left:808px;top:505px;width:35px;height:27px;line-height:27px;color:#157d15;white-space:nowrap;"><i class="c">負</i></div><div class="a" style="left:844px;top:503px;width:36px;height:27px;background:#ddd8d6;"></div><div class="a" style="left:844px;top:530px;width:37px;height:1px;background:#a5a2a0;"></div><div class="a" style="left:880px;top:503px;width:1px;height:28px;background:#a5a2a0;"></div><div class="t td" style="left:844px;top:505px;width:36px;height:27px;line-height:27px;color:#0a0ab4;white-space:nowrap;"><i class="c">走</i></div><div class="a" style="left:881px;top:503px;width:42px;height:27px;background:#ddd8d6;"></div><div class="a" style="left:881px;top:530px;width:43px;height:1px;background:#a5a2a0;"></div><div class="t td" style="left:881px;top:505px;width:50px;height:27px;line-height:27px;color:#157d15;white-space:nowrap;"><i class="c">小</i></div><div class="a" style="left:23px;top:531px;width:1px;height:28px;background:#c9c3c1;"></div><div class="a" style="left:24px;top:531px;width:68px;height:27px;background:#475ca0;"></div><div class="a" style="left:24px;top:558px;width:68px;height:1px;background:#7c8cc0;"></div><div class="a" style="left:92px;top:531px;width:1px;height:28px;background:#7c8cc0;"></div><div class="t ty" style="left:24px;top:533px;width:68px;height:27px;line-height:27px;color:#ffffff;white-space:nowrap;"><i class="c">国际友谊</i></div><div class="a" style="left:93px;top:531px;width:67px;height:27px;background:#e6e0de;"></div><div class="a" style="left:93px;top:558px;width:68px;height:1px;background:#a5a2a0;"></div><div class="a" style="left:160px;top:531px;width:1px;height:28px;background:#a5a2a0;"></div><div class="t td" style="left:93px;top:533px;width:67px;height:27px;line-height:27px;color:#3a3a3a;white-space:nowrap;">25-06-27</div><div class="a" style="left:161px;top:531px;width:114px;height:27px;background:#e6e0de;"></div><div class="a" style="left:161px;top:558px;width:115px;height:1px;background:#a5a2a0;"></div><div class="a" style="left:275px;top:531px;width:1px;height:28px;background:#a5a2a0;"></div><div class="t td" style="left:161px;top:533px;width:114px;height:27px;line-height:27px;color:#3a3a3a;white-space:nowrap;"><span style="color:#157d15"><i class="c">比利时</i> (<i class="c">女</i>)</span></div><div class="a" style="left:276px;top:531px;width:80px;height:27px;background:#e6e0de;"></div><div class="a" style="left:276px;top:558px;width:81px;height:1px;background:#a5a2a0;"></div><div class="a" style="left:356px;top:531px;width:1px;height:28px;background:#a5a2a0;"></div><div class="t td" style="left:276px;top:533px;width:80px;height:27px;line-height:27px;color:#3a3a3a;white-space:nowrap;"><span style="color:#d00a0a">2-0</span>(1-0)</div><div class="a" style="left:357px;top:531px;width:35px;height:27px;background:#e6e0de;"></div><div class="a" style="left:357px;top:558px;width:36px;height:1px;background:#a5a2a0;"></div><div class="a" style="left:392px;top:531px;width:1px;height:28px;background:#a5a2a0;"></div><div class="t td" style="left:357px;top:533px;width:35px;height:27px;line-height:27px;color:#3a3a3a;white-space:nowrap;">8-1</div><div class="a" style="left:393px;top:531px;width:85px;height:27px;background:#e6e0de;"></div><div class="a" style="left:393px;top:558px;width:86px;height:1px;background:#a5a2a0;"></div><div class="a" style="left:478px;top:531px;width:1px;height:28px;background:#a5a2a0;"></div><div class="t td" style="left:393px;top:533px;width:85px;height:27px;line-height:27px;color:#3a3a3a;white-space:nowrap;"><span style="color:#3a3a3a"><i class="c">希腊</i> (<i class="c">女</i>)</span></div><div class="a" style="left:479px;top:531px;width:34px;height:27px;background:#e6e0de;"></div><div class="a" style="left:479px;top:558px;width:35px;height:1px;background:#a5a2a0;"></div><div class="a" style="left:513px;top:531px;width:1px;height:28px;background:#a5a2a0;"></div><div class="t td" style="left:479px;top:533px;width:34px;height:27px;line-height:27px;color:#3a3a3a;white-space:nowrap;">0.77</div><div class="a" style="left:514px;top:531px;width:83px;height:27px;background:#e6e0de;"></div><div class="a" style="left:514px;top:558px;width:84px;height:1px;background:#a5a2a0;"></div><div class="a" style="left:597px;top:531px;width:1px;height:28px;background:#a5a2a0;"></div><div class="t td" style="left:514px;top:533px;width:83px;height:27px;line-height:27px;color:#3a3a3a;white-space:nowrap;"><i class="c">三球</i></div><div class="a" style="left:598px;top:531px;width:34px;height:27px;background:#e6e0de;"></div><div class="a" style="left:598px;top:558px;width:35px;height:1px;background:#a5a2a0;"></div><div class="a" style="left:632px;top:531px;width:1px;height:28px;background:#a5a2a0;"></div><div class="t td" style="left:598px;top:533px;width:34px;height:27px;line-height:27px;color:#3a3a3a;white-space:nowrap;">1.05</div><div class="a" style="left:633px;top:531px;width:57px;height:27px;background:#dddcd8;"></div><div class="a" style="left:633px;top:558px;width:58px;height:1px;background:#a5a2a0;"></div><div class="a" style="left:690px;top:531px;width:1px;height:28px;background:#a5a2a0;"></div><div class="t td" style="left:633px;top:533px;width:57px;height:27px;line-height:27px;color:#3a3a3a;white-space:nowrap;">1.04</div><div class="a" style="left:691px;top:531px;width:58px;height:27px;background:#dddcd8;"></div><div class="a" style="left:691px;top:558px;width:59px;height:1px;background:#a5a2a0;"></div><div class="a" style="left:749px;top:531px;width:1px;height:28px;background:#a5a2a0;"></div><div class="t td" style="left:691px;top:533px;width:58px;height:27px;line-height:27px;color:#3a3a3a;white-space:nowrap;">11.35</div><div class="a" style="left:750px;top:531px;width:57px;height:27px;background:#dddcd8;"></div><div class="a" style="left:750px;top:558px;width:58px;height:1px;background:#a5a2a0;"></div><div class="a" style="left:807px;top:531px;width:1px;height:28px;background:#a5a2a0;"></div><div class="t td" style="left:750px;top:533px;width:57px;height:27px;line-height:27px;color:#3a3a3a;white-space:nowrap;">26.44</div><div class="a" style="left:808px;top:531px;width:35px;height:27px;background:#e6e0de;"></div><div class="a" style="left:808px;top:558px;width:36px;height:1px;background:#a5a2a0;"></div><div class="a" style="left:843px;top:531px;width:1px;height:28px;background:#a5a2a0;"></div><div class="t td" style="left:808px;top:533px;width:35px;height:27px;line-height:27px;color:#d00a0a;white-space:nowrap;"><i class="c">勝</i></div><div class="a" style="left:844px;top:531px;width:36px;height:27px;background:#e6e0de;"></div><div class="a" style="left:844px;top:558px;width:37px;height:1px;background:#a5a2a0;"></div><div class="a" style="left:880px;top:531px;width:1px;height:28px;background:#a5a2a0;"></div><div class="t td" style="left:844px;top:533px;width:36px;height:27px;line-height:27px;color:#157d15;white-space:nowrap;"><i class="c">輸</i></div><div class="a" style="left:881px;top:531px;width:42px;height:27px;background:#e6e0de;"></div><div class="a" style="left:881px;top:558px;width:43px;height:1px;background:#a5a2a0;"></div><div class="t td" style="left:881px;top:533px;width:50px;height:27px;line-height:27px;color:#157d15;white-space:nowrap;"><i class="c">小</i></div><div class="a" style="left:23px;top:559px;width:1px;height:28px;background:#c9c3c1;"></div><div class="a" style="left:24px;top:559px;width:68px;height:27px;background:#475ca0;"></div><div class="a" style="left:24px;top:586px;width:68px;height:1px;background:#7c8cc0;"></div><div class="a" style="left:92px;top:559px;width:1px;height:28px;background:#7c8cc0;"></div><div class="t ty" style="left:24px;top:561px;width:68px;height:27px;line-height:27px;color:#ffffff;white-space:nowrap;"><i class="c">国际友谊</i></div><div class="a" style="left:93px;top:559px;width:67px;height:27px;background:#ddd8d6;"></div><div class="a" style="left:93px;top:586px;width:68px;height:1px;background:#a5a2a0;"></div><div class="a" style="left:160px;top:559px;width:1px;height:28px;background:#a5a2a0;"></div><div class="t td" style="left:93px;top:561px;width:67px;height:27px;line-height:27px;color:#3a3a3a;white-space:nowrap;">25-06-21</div><div class="a" style="left:161px;top:559px;width:114px;height:27px;background:#ddd8d6;"></div><div class="a" style="left:161px;top:586px;width:115px;height:1px;background:#a5a2a0;"></div><div class="a" style="left:275px;top:559px;width:1px;height:28px;background:#a5a2a0;"></div><div class="t td" style="left:161px;top:561px;width:114px;height:27px;line-height:27px;color:#3a3a3a;white-space:nowrap;"><span style="color:#3a3a3a"><i class="c">法国</i> (<i class="c">女</i>)</span></div><div class="a" style="left:276px;top:559px;width:80px;height:27px;background:#ddd8d6;"></div><div class="a" style="left:276px;top:586px;width:81px;height:1px;background:#a5a2a0;"></div><div class="a" style="left:356px;top:559px;width:1px;height:28px;background:#a5a2a0;"></div><div class="t td" style="left:276px;top:561px;width:80px;height:27px;line-height:27px;color:#3a3a3a;white-space:nowrap;"><span style="color:#d00a0a">5-0</span>(2-0)</div><div class="a" style="left:357px;top:559px;width:35px;height:27px;background:#ddd8d6;"></div><div class="a" style="left:357px;top:586px;width:36px;height:1px;background:#a5a2a0;"></div><div class="a" style="left:392px;top:559px;width:1px;height:28px;background:#a5a2a0;"></div><div class="t td" style="left:357px;top:561px;width:35px;height:27px;line-height:27px;color:#3a3a3a;white-space:nowrap;">9-1</div><div class="a" style="left:393px;top:559px;width:85px;height:27px;background:#ddd8d6;"></div><div class="a" style="left:393px;top:586px;width:86px;height:1px;background:#a5a2a0;"></div><div class="a" style="left:478px;top:559px;width:1px;height:28px;background:#a5a2a0;"></div><div class="t td" style="left:393px;top:561px;width:85px;height:27px;line-height:27px;color:#3a3a3a;white-space:nowrap;"><span style="color:#157d15"><i class="c">比利时</i> (<i class="c">女</i>)</span></div><div class="a" style="left:479px;top:559px;width:34px;height:27px;background:#ddd8d6;"></div><div class="a" style="left:479px;top:586px;width:35px;height:1px;background:#a5a2a0;"></div><div class="a" style="left:513px;top:559px;width:1px;height:28px;background:#a5a2a0;"></div><div class="t td" style="left:479px;top:561px;width:34px;height:27px;line-height:27px;color:#3a3a3a;white-space:nowrap;">0.82</div><div class="a" style="left:514px;top:559px;width:83px;height:27px;background:#ddd8d6;"></div><div class="a" style="left:514px;top:586px;width:84px;height:1px;background:#a5a2a0;"></div><div class="a" style="left:597px;top:559px;width:1px;height:28px;background:#a5a2a0;"></div><div class="t td" style="left:514px;top:561px;width:83px;height:27px;line-height:27px;color:#3a3a3a;white-space:nowrap;"><i class="c">两球</i></div><div class="a" style="left:598px;top:559px;width:34px;height:27px;background:#ddd8d6;"></div><div class="a" style="left:598px;top:586px;width:35px;height:1px;background:#a5a2a0;"></div><div class="a" style="left:632px;top:559px;width:1px;height:28px;background:#a5a2a0;"></div><div class="t td" style="left:598px;top:561px;width:34px;height:27px;line-height:27px;color:#3a3a3a;white-space:nowrap;">1.00</div><div class="a" style="left:633px;top:559px;width:57px;height:27px;background:#d7d6d3;"></div><div class="a" style="left:633px;top:586px;width:58px;height:1px;background:#a5a2a0;"></div><div class="a" style="left:690px;top:559px;width:1px;height:28px;background:#a5a2a0;"></div><div class="t td" style="left:633px;top:561px;width:57px;height:27px;line-height:27px;color:#3a3a3a;white-space:nowrap;">1.15</div><div class="a" style="left:691px;top:559px;width:58px;height:27px;background:#d7d6d3;"></div><div class="a" style="left:691px;top:586px;width:59px;height:1px;background:#a5a2a0;"></div><div class="a" style="left:749px;top:559px;width:1px;height:28px;background:#a5a2a0;"></div><div class="t td" style="left:691px;top:561px;width:58px;height:27px;line-height:27px;color:#3a3a3a;white-space:nowrap;">6.71</div><div class="a" style="left:750px;top:559px;width:57px;height:27px;background:#d7d6d3;"></div><div class="a" style="left:750px;top:586px;width:58px;height:1px;background:#a5a2a0;"></div><div class="a" style="left:807px;top:559px;width:1px;height:28px;background:#a5a2a0;"></div><div class="t td" style="left:750px;top:561px;width:57px;height:27px;line-height:27px;color:#3a3a3a;white-space:nowrap;">13.36</div><div class="a" style="left:808px;top:559px;width:35px;height:27px;background:#ddd8d6;"></div><div class="a" style="left:808px;top:586px;width:36px;height:1px;background:#a5a2a0;"></div><div class="a" style="left:843px;top:559px;width:1px;height:28px;background:#a5a2a0;"></div><div class="t td" style="left:808px;top:561px;width:35px;height:27px;line-height:27px;color:#157d15;white-space:nowrap;"><i class="c">負</i></div><div class="a" style="left:844px;top:559px;width:36px;height:27px;background:#ddd8d6;"></div><div class="a" style="left:844px;top:586px;width:37px;height:1px;background:#a5a2a0;"></div><div class="a" style="left:880px;top:559px;width:1px;height:28px;background:#a5a2a0;"></div><div class="t td" style="left:844px;top:561px;width:36px;height:27px;line-height:27px;color:#157d15;white-space:nowrap;"><i class="c">輸</i></div><div class="a" style="left:881px;top:559px;width:42px;height:27px;background:#ddd8d6;"></div><div class="a" style="left:881px;top:586px;width:43px;height:1px;background:#a5a2a0;"></div><div class="t td" style="left:881px;top:561px;width:50px;height:27px;line-height:27px;color:#d00a0a;white-space:nowrap;"><i class="c">大</i></div><div class="a" style="left:23px;top:587px;width:1px;height:28px;background:#c9c3c1;"></div><div class="a" style="left:24px;top:587px;width:68px;height:27px;background:#bb1a45;"></div><div class="a" style="left:24px;top:614px;width:68px;height:1px;background:#cc5a78;"></div><div class="a" style="left:92px;top:587px;width:1px;height:28px;background:#cc5a78;"></div><div class="t ty" style="left:24px;top:589px;width:68px;height:27px;line-height:27px;color:#ffffff;white-space:nowrap;"><i class="c">欧女国联</i></div><div class="a" style="left:93px;top:587px;width:67px;height:27px;background:#e6e0de;"></div><div class="a" style="left:93px;top:614px;width:68px;height:1px;background:#a5a2a0;"></div><div class="a" style="left:160px;top:587px;width:1px;height:28px;background:#a5a2a0;"></div><div class="t td" style="left:93px;top:589px;width:67px;height:27px;line-height:27px;color:#3a3a3a;white-space:nowrap;">25-06-04</div><div class="a" style="left:161px;top:587px;width:114px;height:27px;background:#e6e0de;"></div><div class="a" style="left:161px;top:614px;width:115px;height:1px;background:#a5a2a0;"></div><div class="a" style="left:275px;top:587px;width:1px;height:28px;background:#a5a2a0;"></div><div class="t td" style="left:161px;top:589px;width:114px;height:27px;line-height:27px;color:#3a3a3a;white-space:nowrap;"><span style="color:#3a3a3a"><i class="c">葡萄牙</i> (<i class="c">女</i>)</span></div><div class="a" style="left:276px;top:587px;width:80px;height:27px;background:#e6e0de;"></div><div class="a" style="left:276px;top:614px;width:81px;height:1px;background:#a5a2a0;"></div><div class="a" style="left:356px;top:587px;width:1px;height:28px;background:#a5a2a0;"></div><div class="t td" style="left:276px;top:589px;width:80px;height:27px;line-height:27px;color:#3a3a3a;white-space:nowrap;"><span style="color:#d00a0a">0-3</span>(0-1)</div><div class="a" style="left:357px;top:587px;width:35px;height:27px;background:#e6e0de;"></div><div class="a" style="left:357px;top:614px;width:36px;height:1px;background:#a5a2a0;"></div><div class="a" style="left:392px;top:587px;width:1px;height:28px;background:#a5a2a0;"></div><div class="t td" style="left:357px;top:589px;width:35px;height:27px;line-height:27px;color:#3a3a3a;white-space:nowrap;">13-1</div><div class="a" style="left:393px;top:587px;width:85px;height:27px;background:#e6e0de;"></div><div class="a" style="left:393px;top:614px;width:86px;height:1px;background:#a5a2a0;"></div><div class="a" style="left:478px;top:587px;width:1px;height:28px;background:#a5a2a0;"></div><div class="t td" style="left:393px;top:589px;width:85px;height:27px;line-height:27px;color:#3a3a3a;white-space:nowrap;"><span style="color:#157d15"><i class="c">比利时</i> (<i class="c">女</i>)</span></div><div class="a" style="left:479px;top:587px;width:34px;height:27px;background:#e6e0de;"></div><div class="a" style="left:479px;top:614px;width:35px;height:1px;background:#a5a2a0;"></div><div class="a" style="left:513px;top:587px;width:1px;height:28px;background:#a5a2a0;"></div><div class="t td" style="left:479px;top:589px;width:34px;height:27px;line-height:27px;color:#3a3a3a;white-space:nowrap;">1.04</div><div class="a" style="left:514px;top:587px;width:83px;height:27px;background:#e6e0de;"></div><div class="a" style="left:514px;top:614px;width:84px;height:1px;background:#a5a2a0;"></div><div class="a" style="left:597px;top:587px;width:1px;height:28px;background:#a5a2a0;"></div><div class="t td" style="left:514px;top:589px;width:83px;height:27px;line-height:27px;color:#3a3a3a;white-space:nowrap;"><i class="c">一球</i></div><div class="a" style="left:598px;top:587px;width:34px;height:27px;background:#e6e0de;"></div><div class="a" style="left:598px;top:614px;width:35px;height:1px;background:#a5a2a0;"></div><div class="a" style="left:632px;top:587px;width:1px;height:28px;background:#a5a2a0;"></div><div class="t td" style="left:598px;top:589px;width:34px;height:27px;line-height:27px;color:#3a3a3a;white-space:nowrap;">0.78</div><div class="a" style="left:633px;top:587px;width:57px;height:27px;background:#dddcd8;"></div><div class="a" style="left:633px;top:614px;width:58px;height:1px;background:#a5a2a0;"></div><div class="a" style="left:690px;top:587px;width:1px;height:28px;background:#a5a2a0;"></div><div class="t td" style="left:633px;top:589px;width:57px;height:27px;line-height:27px;color:#3a3a3a;white-space:nowrap;">1.61</div><div class="a" style="left:691px;top:587px;width:58px;height:27px;background:#dddcd8;"></div><div class="a" style="left:691px;top:614px;width:59px;height:1px;background:#a5a2a0;"></div><div class="a" style="left:749px;top:587px;width:1px;height:28px;background:#a5a2a0;"></div><div class="t td" style="left:691px;top:589px;width:58px;height:27px;line-height:27px;color:#3a3a3a;white-space:nowrap;">3.90</div><div class="a" style="left:750px;top:587px;width:57px;height:27px;background:#dddcd8;"></div><div class="a" style="left:750px;top:614px;width:58px;height:1px;background:#a5a2a0;"></div><div class="a" style="left:807px;top:587px;width:1px;height:28px;background:#a5a2a0;"></div><div class="t td" style="left:750px;top:589px;width:57px;height:27px;line-height:27px;color:#3a3a3a;white-space:nowrap;">4.68</div><div class="a" style="left:808px;top:587px;width:35px;height:27px;background:#e6e0de;"></div><div class="a" style="left:808px;top:614px;width:36px;height:1px;background:#a5a2a0;"></div><div class="a" style="left:843px;top:587px;width:1px;height:28px;background:#a5a2a0;"></div><div class="t td" style="left:808px;top:589px;width:35px;height:27px;line-height:27px;color:#d00a0a;white-space:nowrap;"><i class="c">勝</i></div><div class="a" style="left:844px;top:587px;width:36px;height:27px;background:#e6e0de;"></div><div class="a" style="left:844px;top:614px;width:37px;height:1px;background:#a5a2a0;"></div><div class="a" style="left:880px;top:587px;width:1px;height:28px;background:#a5a2a0;"></div><div class="t td" style="left:844px;top:589px;width:36px;height:27px;line-height:27px;color:#d00a0a;white-space:nowrap;"><i class="c">赢</i></div><div class="a" style="left:881px;top:587px;width:42px;height:27px;background:#e6e0de;"></div><div class="a" style="left:881px;top:614px;width:43px;height:1px;background:#a5a2a0;"></div><div class="t td" style="left:881px;top:589px;width:50px;height:27px;line-height:27px;color:#d00a0a;white-space:nowrap;"><i class="c">大</i></div><div class="a" style="left:23px;top:615px;width:1px;height:28px;background:#c9c3c1;"></div><div class="a" style="left:24px;top:615px;width:68px;height:27px;background:#bb1a45;"></div><div class="a" style="left:24px;top:642px;width:68px;height:1px;background:#cc5a78;"></div><div class="a" style="left:92px;top:615px;width:1px;height:28px;background:#cc5a78;"></div><div class="t ty" style="left:24px;top:617px;width:68px;height:27px;line-height:27px;color:#ffffff;white-space:nowrap;"><i class="c">欧女国联</i></div><div class="a" style="left:93px;top:615px;width:67px;height:27px;background:#ddd8d6;"></div><div class="a" style="left:93px;top:642px;width:68px;height:1px;background:#a5a2a0;"></div><div class="a" style="left:160px;top:615px;width:1px;height:28px;background:#a5a2a0;"></div><div class="t td" style="left:93px;top:617px;width:67px;height:27px;line-height:27px;color:#3a3a3a;white-space:nowrap;">25-05-31</div><div class="a" style="left:161px;top:615px;width:114px;height:27px;background:#ddd8d6;"></div><div class="a" style="left:161px;top:642px;width:115px;height:1px;background:#a5a2a0;"></div><div class="a" style="left:275px;top:615px;width:1px;height:28px;background:#a5a2a0;"></div><div class="t td" style="left:161px;top:617px;width:114px;height:27px;line-height:27px;color:#3a3a3a;white-space:nowrap;"><span style="color:#157d15"><i class="c">比利时</i> (<i class="c">女</i>)</span></div><div class="a" style="left:276px;top:615px;width:80px;height:27px;background:#ddd8d6;"></div><div class="a" style="left:276px;top:642px;width:81px;height:1px;background:#a5a2a0;"></div><div class="a" style="left:356px;top:615px;width:1px;height:28px;background:#a5a2a0;"></div><div class="t td" style="left:276px;top:617px;width:80px;height:27px;line-height:27px;color:#3a3a3a;white-space:nowrap;"><span style="color:#d00a0a">1-5</span>(0-1)</div><div class="a" style="left:357px;top:615px;width:35px;height:27px;background:#ddd8d6;"></div><div class="a" style="left:357px;top:642px;width:36px;height:1px;background:#a5a2a0;"></div><div class="a" style="left:392px;top:615px;width:1px;height:28px;background:#a5a2a0;"></div><div class="t td" style="left:357px;top:617px;width:35px;height:27px;line-height:27px;color:#3a3a3a;white-space:nowrap;">0-13</div><div class="a" style="left:393px;top:615px;width:85px;height:27px;background:#ddd8d6;"></div><div class="a" style="left:393px;top:642px;width:86px;height:1px;background:#a5a2a0;"></div><div class="a" style="left:478px;top:615px;width:1px;height:28px;background:#a5a2a0;"></div><div class="t td" style="left:393px;top:617px;width:85px;height:27px;line-height:27px;color:#3a3a3a;white-space:nowrap;"><span style="color:#3a3a3a"><i class="c">西班牙</i> (<i class="c">女</i>)</span></div><div class="a" style="left:479px;top:615px;width:34px;height:27px;background:#ddd8d6;"></div><div class="a" style="left:479px;top:642px;width:35px;height:1px;background:#a5a2a0;"></div><div class="a" style="left:513px;top:615px;width:1px;height:28px;background:#a5a2a0;"></div><div class="t td" style="left:479px;top:617px;width:34px;height:27px;line-height:27px;color:#3a3a3a;white-space:nowrap;">0.76</div><div class="a" style="left:514px;top:615px;width:83px;height:27px;background:#ddd8d6;"></div><div class="a" style="left:514px;top:642px;width:84px;height:1px;background:#a5a2a0;"></div><div class="a" style="left:597px;top:615px;width:1px;height:28px;background:#a5a2a0;"></div><div class="t td" style="left:514px;top:617px;width:83px;height:27px;line-height:27px;color:#3a3a3a;white-space:nowrap;"><span style="color:#d00a0a;position:relative;top:-2px;font-size:13px">*</span><i class="c">两球半</i>/<i class="c">三</i></div><div class="a" style="left:598px;top:615px;width:34px;height:27px;background:#ddd8d6;"></div><div class="a" style="left:598px;top:642px;width:35px;height:1px;background:#a5a2a0;"></div><div class="a" style="left:632px;top:615px;width:1px;height:28px;background:#a5a2a0;"></div><div class="t td" style="left:598px;top:617px;width:34px;height:27px;line-height:27px;color:#3a3a3a;white-space:nowrap;">1.06</div><div class="a" style="left:633px;top:615px;width:57px;height:27px;background:#d7d6d3;"></div><div class="a" style="left:633px;top:642px;width:58px;height:1px;background:#a5a2a0;"></div><div class="a" style="left:690px;top:615px;width:1px;height:28px;background:#a5a2a0;"></div><div class="t td" style="left:633px;top:617px;width:57px;height:27px;line-height:27px;color:#3a3a3a;white-space:nowrap;">18.44</div><div class="a" style="left:691px;top:615px;width:58px;height:27px;background:#d7d6d3;"></div><div class="a" style="left:691px;top:642px;width:59px;height:1px;background:#a5a2a0;"></div><div class="a" style="left:749px;top:615px;width:1px;height:28px;background:#a5a2a0;"></div><div class="t td" style="left:691px;top:617px;width:58px;height:27px;line-height:27px;color:#3a3a3a;white-space:nowrap;">9.71</div><div class="a" style="left:750px;top:615px;width:57px;height:27px;background:#d7d6d3;"></div><div class="a" style="left:750px;top:642px;width:58px;height:1px;background:#a5a2a0;"></div><div class="a" style="left:807px;top:615px;width:1px;height:28px;background:#a5a2a0;"></div><div class="t td" style="left:750px;top:617px;width:57px;height:27px;line-height:27px;color:#3a3a3a;white-space:nowrap;">1.07</div><div class="a" style="left:808px;top:615px;width:35px;height:27px;background:#ddd8d6;"></div><div class="a" style="left:808px;top:642px;width:36px;height:1px;background:#a5a2a0;"></div><div class="a" style="left:843px;top:615px;width:1px;height:28px;background:#a5a2a0;"></div><div class="t td" style="left:808px;top:617px;width:35px;height:27px;line-height:27px;color:#157d15;white-space:nowrap;"><i class="c">負</i></div><div class="a" style="left:844px;top:615px;width:36px;height:27px;background:#ddd8d6;"></div><div class="a" style="left:844px;top:642px;width:37px;height:1px;background:#a5a2a0;"></div><div class="a" style="left:880px;top:615px;width:1px;height:28px;background:#a5a2a0;"></div><div class="t td" style="left:844px;top:617px;width:36px;height:27px;line-height:27px;color:#157d15;white-space:nowrap;"><i class="c">輸</i></div><div class="a" style="left:881px;top:615px;width:42px;height:27px;background:#ddd8d6;"></div><div class="a" style="left:881px;top:642px;width:43px;height:1px;background:#a5a2a0;"></div><div class="t td" style="left:881px;top:617px;width:50px;height:27px;line-height:27px;color:#d00a0a;white-space:nowrap;"><i class="c">大</i></div><div class="a" style="left:23px;top:643px;width:1px;height:28px;background:#c9c3c1;"></div><div class="a" style="left:24px;top:643px;width:68px;height:27px;background:#bb1a45;"></div><div class="a" style="left:24px;top:670px;width:68px;height:1px;background:#cc5a78;"></div><div class="a" style="left:92px;top:643px;width:1px;height:28px;background:#cc5a78;"></div><div class="t ty" style="left:24px;top:645px;width:68px;height:27px;line-height:27px;color:#ffffff;white-space:nowrap;"><i class="c">欧女国联</i></div><div class="a" style="left:93px;top:643px;width:67px;height:27px;background:#e6e0de;"></div><div class="a" style="left:93px;top:670px;width:68px;height:1px;background:#a5a2a0;"></div><div class="a" style="left:160px;top:643px;width:1px;height:28px;background:#a5a2a0;"></div><div class="t td" style="left:93px;top:645px;width:67px;height:27px;line-height:27px;color:#3a3a3a;white-space:nowrap;">25-04-09</div><div class="a" style="left:161px;top:643px;width:114px;height:27px;background:#e6e0de;"></div><div class="a" style="left:161px;top:670px;width:115px;height:1px;background:#a5a2a0;"></div><div class="a" style="left:275px;top:643px;width:1px;height:28px;background:#a5a2a0;"></div><div class="t td" style="left:161px;top:645px;width:114px;height:27px;line-height:27px;color:#3a3a3a;white-space:nowrap;"><span style="color:#157d15"><i class="c">比利时</i> (<i class="c">女</i>)</span></div><div class="a" style="left:276px;top:643px;width:80px;height:27px;background:#e6e0de;"></div><div class="a" style="left:276px;top:670px;width:81px;height:1px;background:#a5a2a0;"></div><div class="a" style="left:356px;top:643px;width:1px;height:28px;background:#a5a2a0;"></div><div class="t td" style="left:276px;top:645px;width:80px;height:27px;line-height:27px;color:#3a3a3a;white-space:nowrap;"><span style="color:#d00a0a">3-2</span>(3-1)</div><div class="a" style="left:357px;top:643px;width:35px;height:27px;background:#e6e0de;"></div><div class="a" style="left:357px;top:670px;width:36px;height:1px;background:#a5a2a0;"></div><div class="a" style="left:392px;top:643px;width:1px;height:28px;background:#a5a2a0;"></div><div class="t td" style="left:357px;top:645px;width:35px;height:27px;line-height:27px;color:#3a3a3a;white-space:nowrap;">3-9</div><div class="a" style="left:393px;top:643px;width:85px;height:27px;background:#e6e0de;"></div><div class="a" style="left:393px;top:670px;width:86px;height:1px;background:#a5a2a0;"></div><div class="a" style="left:478px;top:643px;width:1px;height:28px;background:#a5a2a0;"></div><div class="t td" style="left:393px;top:645px;width:85px;height:27px;line-height:27px;color:#3a3a3a;white-space:nowrap;"><span style="color:#3a3a3a"><i class="c">英格兰</i> (<i class="c">女</i>)</span></div><div class="a" style="left:479px;top:643px;width:34px;height:27px;background:#e6e0de;"></div><div class="a" style="left:479px;top:670px;width:35px;height:1px;background:#a5a2a0;"></div><div class="a" style="left:513px;top:643px;width:1px;height:28px;background:#a5a2a0;"></div><div class="t td" style="left:479px;top:645px;width:34px;height:27px;line-height:27px;color:#3a3a3a;white-space:nowrap;">1.07</div><div class="a" style="left:514px;top:643px;width:83px;height:27px;background:#e6e0de;"></div><div class="a" style="left:514px;top:670px;width:84px;height:1px;background:#a5a2a0;"></div><div class="a" style="left:597px;top:643px;width:1px;height:28px;background:#a5a2a0;"></div><div class="t td" style="left:514px;top:645px;width:83px;height:27px;line-height:27px;color:#3a3a3a;white-space:nowrap;"><span style="color:#d00a0a;position:relative;top:-2px;font-size:13px">*</span><i class="c">球半</i>/<i class="c">两</i></div><div class="a" style="left:598px;top:643px;width:34px;height:27px;background:#e6e0de;"></div><div class="a" style="left:598px;top:670px;width:35px;height:1px;background:#a5a2a0;"></div><div class="a" style="left:632px;top:643px;width:1px;height:28px;background:#a5a2a0;"></div><div class="t td" style="left:598px;top:645px;width:34px;height:27px;line-height:27px;color:#3a3a3a;white-space:nowrap;">0.75</div><div class="a" style="left:633px;top:643px;width:57px;height:27px;background:#dddcd8;"></div><div class="a" style="left:633px;top:670px;width:58px;height:1px;background:#a5a2a0;"></div><div class="a" style="left:690px;top:643px;width:1px;height:28px;background:#a5a2a0;"></div><div class="t td" style="left:633px;top:645px;width:57px;height:27px;line-height:27px;color:#3a3a3a;white-space:nowrap;">11.70</div><div class="a" style="left:691px;top:643px;width:58px;height:27px;background:#dddcd8;"></div><div class="a" style="left:691px;top:670px;width:59px;height:1px;background:#a5a2a0;"></div><div class="a" style="left:749px;top:643px;width:1px;height:28px;background:#a5a2a0;"></div><div class="t td" style="left:691px;top:645px;width:58px;height:27px;line-height:27px;color:#3a3a3a;white-space:nowrap;">6.37</div><div class="a" style="left:750px;top:643px;width:57px;height:27px;background:#dddcd8;"></div><div class="a" style="left:750px;top:670px;width:58px;height:1px;background:#a5a2a0;"></div><div class="a" style="left:807px;top:643px;width:1px;height:28px;background:#a5a2a0;"></div><div class="t td" style="left:750px;top:645px;width:57px;height:27px;line-height:27px;color:#3a3a3a;white-space:nowrap;">1.19</div><div class="a" style="left:808px;top:643px;width:35px;height:27px;background:#e6e0de;"></div><div class="a" style="left:808px;top:670px;width:36px;height:1px;background:#a5a2a0;"></div><div class="a" style="left:843px;top:643px;width:1px;height:28px;background:#a5a2a0;"></div><div class="t td" style="left:808px;top:645px;width:35px;height:27px;line-height:27px;color:#d00a0a;white-space:nowrap;"><i class="c">勝</i></div><div class="a" style="left:844px;top:643px;width:36px;height:27px;background:#e6e0de;"></div><div class="a" style="left:844px;top:670px;width:37px;height:1px;background:#a5a2a0;"></div><div class="a" style="left:880px;top:643px;width:1px;height:28px;background:#a5a2a0;"></div><div class="t td" style="left:844px;top:645px;width:36px;height:27px;line-height:27px;color:#d00a0a;white-space:nowrap;"><i class="c">赢</i></div><div class="a" style="left:881px;top:643px;width:42px;height:27px;background:#e6e0de;"></div><div class="a" style="left:881px;top:670px;width:43px;height:1px;background:#a5a2a0;"></div><div class="t td" style="left:881px;top:645px;width:50px;height:27px;line-height:27px;color:#d00a0a;white-space:nowrap;"><i class="c">大</i></div><div class="a" style="left:23px;top:671px;width:1px;height:28px;background:#c9c3c1;"></div><div class="a" style="left:24px;top:671px;width:68px;height:27px;background:#bb1a45;"></div><div class="a" style="left:24px;top:698px;width:68px;height:1px;background:#cc5a78;"></div><div class="a" style="left:92px;top:671px;width:1px;height:28px;background:#cc5a78;"></div><div class="t ty" style="left:24px;top:673px;width:68px;height:27px;line-height:27px;color:#ffffff;white-space:nowrap;"><i class="c">欧女国联</i></div><div class="a" style="left:93px;top:671px;width:67px;height:27px;background:#ddd8d6;"></div><div class="a" style="left:93px;top:698px;width:68px;height:1px;background:#a5a2a0;"></div><div class="a" style="left:160px;top:671px;width:1px;height:28px;background:#a5a2a0;"></div><div class="t td" style="left:93px;top:673px;width:67px;height:27px;line-height:27px;color:#3a3a3a;white-space:nowrap;">25-04-05</div><div class="a" style="left:161px;top:671px;width:114px;height:27px;background:#ddd8d6;"></div><div class="a" style="left:161px;top:698px;width:115px;height:1px;background:#a5a2a0;"></div><div class="a" style="left:275px;top:671px;width:1px;height:28px;background:#a5a2a0;"></div><div class="t td" style="left:161px;top:673px;width:114px;height:27px;line-height:27px;color:#3a3a3a;white-space:nowrap;"><span style="color:#3a3a3a"><i class="c">英格兰</i> (<i class="c">女</i>)</span></div><div class="a" style="left:276px;top:671px;width:80px;height:27px;background:#ddd8d6;"></div><div class="a" style="left:276px;top:698px;width:81px;height:1px;background:#a5a2a0;"></div><div class="a" style="left:356px;top:671px;width:1px;height:28px;background:#a5a2a0;"></div><div class="t td" style="left:276px;top:673px;width:80px;height:27px;line-height:27px;color:#3a3a3a;white-space:nowrap;"><span style="color:#d00a0a">5-0</span>(2-0)</div><div class="a" style="left:357px;top:671px;width:35px;height:27px;background:#ddd8d6;"></div><div class="a" style="left:357px;top:698px;width:36px;height:1px;background:#a5a2a0;"></div><div class="a" style="left:392px;top:671px;width:1px;height:28px;background:#a5a2a0;"></div><div class="t td" style="left:357px;top:673px;width:35px;height:27px;line-height:27px;color:#3a3a3a;white-space:nowrap;">9-3</div><div class="a" style="left:393px;top:671px;width:85px;height:27px;background:#ddd8d6;"></div><div class="a" style="left:393px;top:698px;width:86px;height:1px;background:#a5a2a0;"></div><div class="a" style="left:478px;top:671px;width:1px;height:28px;background:#a5a2a0;"></div><div class="t td" style="left:393px;top:673px;width:85px;height:27px;line-height:27px;color:#3a3a3a;white-space:nowrap;"><span style="color:#157d15"><i class="c">比利时</i> (<i class="c">女</i>)</span></div><div class="a" style="left:479px;top:671px;width:34px;height:27px;background:#ddd8d6;"></div><div class="a" style="left:479px;top:698px;width:35px;height:1px;background:#a5a2a0;"></div><div class="a" style="left:513px;top:671px;width:1px;height:28px;background:#a5a2a0;"></div><div class="t td" style="left:479px;top:673px;width:34px;height:27px;line-height:27px;color:#3a3a3a;white-space:nowrap;">0.97</div><div class="a" style="left:514px;top:671px;width:83px;height:27px;background:#ddd8d6;"></div><div class="a" style="left:514px;top:698px;width:84px;height:1px;background:#a5a2a0;"></div><div class="a" style="left:597px;top:671px;width:1px;height:28px;background:#a5a2a0;"></div><div class="t td" style="left:514px;top:673px;width:83px;height:27px;line-height:27px;color:#3a3a3a;white-space:nowrap;"><i class="c">两球</i></div><div class="a" style="left:598px;top:671px;width:34px;height:27px;background:#ddd8d6;"></div><div class="a" style="left:598px;top:698px;width:35px;height:1px;background:#a5a2a0;"></div><div class="a" style="left:632px;top:671px;width:1px;height:28px;background:#a5a2a0;"></div><div class="t td" style="left:598px;top:673px;width:34px;height:27px;line-height:27px;color:#3a3a3a;white-space:nowrap;">0.85</div><div class="a" style="left:633px;top:671px;width:57px;height:27px;background:#d7d6d3;"></div><div class="a" style="left:633px;top:698px;width:58px;height:1px;background:#a5a2a0;"></div><div class="a" style="left:690px;top:671px;width:1px;height:28px;background:#a5a2a0;"></div><div class="t td" style="left:633px;top:673px;width:57px;height:27px;line-height:27px;color:#3a3a3a;white-space:nowrap;">1.17</div><div class="a" style="left:691px;top:671px;width:58px;height:27px;background:#d7d6d3;"></div><div class="a" style="left:691px;top:698px;width:59px;height:1px;background:#a5a2a0;"></div><div class="a" style="left:749px;top:671px;width:1px;height:28px;background:#a5a2a0;"></div><div class="t td" style="left:691px;top:673px;width:58px;height:27px;line-height:27px;color:#3a3a3a;white-space:nowrap;">6.77</div><div class="a" style="left:750px;top:671px;width:57px;height:27px;background:#d7d6d3;"></div><div class="a" style="left:750px;top:698px;width:58px;height:1px;background:#a5a2a0;"></div><div class="a" style="left:807px;top:671px;width:1px;height:28px;background:#a5a2a0;"></div><div class="t td" style="left:750px;top:673px;width:57px;height:27px;line-height:27px;color:#3a3a3a;white-space:nowrap;">12.22</div><div class="a" style="left:808px;top:671px;width:35px;height:27px;background:#ddd8d6;"></div><div class="a" style="left:808px;top:698px;width:36px;height:1px;background:#a5a2a0;"></div><div class="a" style="left:843px;top:671px;width:1px;height:28px;background:#a5a2a0;"></div><div class="t td" style="left:808px;top:673px;width:35px;height:27px;line-height:27px;color:#157d15;white-space:nowrap;"><i class="c">負</i></div><div class="a" style="left:844px;top:671px;width:36px;height:27px;background:#ddd8d6;"></div><div class="a" style="left:844px;top:698px;width:37px;height:1px;background:#a5a2a0;"></div><div class="a" style="left:880px;top:671px;width:1px;height:28px;background:#a5a2a0;"></div><div class="t td" style="left:844px;top:673px;width:36px;height:27px;line-height:27px;color:#157d15;white-space:nowrap;"><i class="c">輸</i></div><div class="a" style="left:881px;top:671px;width:42px;height:27px;background:#ddd8d6;"></div><div class="a" style="left:881px;top:698px;width:43px;height:1px;background:#a5a2a0;"></div><div class="t td" style="left:881px;top:673px;width:50px;height:27px;line-height:27px;color:#d00a0a;white-space:nowrap;"><i class="c">大</i></div><div class="a" style="left:23px;top:699px;width:1px;height:28px;background:#c9c3c1;"></div><div class="a" style="left:24px;top:699px;width:68px;height:27px;background:#bb1a45;"></div><div class="a" style="left:24px;top:726px;width:68px;height:1px;background:#cc5a78;"></div><div class="a" style="left:92px;top:699px;width:1px;height:28px;background:#cc5a78;"></div><div class="t ty" style="left:24px;top:701px;width:68px;height:27px;line-height:27px;color:#ffffff;white-space:nowrap;"><i class="c">欧女国联</i></div><div class="a" style="left:93px;top:699px;width:67px;height:27px;background:#e6e0de;"></div><div class="a" style="left:93px;top:726px;width:68px;height:1px;background:#a5a2a0;"></div><div class="a" style="left:160px;top:699px;width:1px;height:28px;background:#a5a2a0;"></div><div class="t td" style="left:93px;top:701px;width:67px;height:27px;line-height:27px;color:#3a3a3a;white-space:nowrap;">25-02-27</div><div class="a" style="left:161px;top:699px;width:114px;height:27px;background:#e6e0de;"></div><div class="a" style="left:161px;top:726px;width:115px;height:1px;background:#a5a2a0;"></div><div class="a" style="left:275px;top:699px;width:1px;height:28px;background:#a5a2a0;"></div><div class="t td" style="left:161px;top:701px;width:114px;height:27px;line-height:27px;color:#3a3a3a;white-space:nowrap;"><span style="color:#157d15"><i class="c">比利时</i> (<i class="c">女</i>)</span></div><div class="a" style="left:276px;top:699px;width:80px;height:27px;background:#e6e0de;"></div><div class="a" style="left:276px;top:726px;width:81px;height:1px;background:#a5a2a0;"></div><div class="a" style="left:356px;top:699px;width:1px;height:28px;background:#a5a2a0;"></div><div class="t td" style="left:276px;top:701px;width:80px;height:27px;line-height:27px;color:#3a3a3a;white-space:nowrap;"><span style="color:#d00a0a">0-1</span>(0-0)</div><div class="a" style="left:357px;top:699px;width:35px;height:27px;background:#e6e0de;"></div><div class="a" style="left:357px;top:726px;width:36px;height:1px;background:#a5a2a0;"></div><div class="a" style="left:392px;top:699px;width:1px;height:28px;background:#a5a2a0;"></div><div class="t td" style="left:357px;top:701px;width:35px;height:27px;line-height:27px;color:#3a3a3a;white-space:nowrap;">3-3</div><div class="a" style="left:393px;top:699px;width:85px;height:27px;background:#e6e0de;"></div><div class="a" style="left:393px;top:726px;width:86px;height:1px;background:#a5a2a0;"></div><div class="a" style="left:478px;top:699px;width:1px;height:28px;background:#a5a2a0;"></div><div class="t td" style="left:393px;top:701px;width:85px;height:27px;line-height:27px;color:#3a3a3a;white-space:nowrap;"><span style="color:#3a3a3a"><i class="c">葡萄牙</i> (<i class="c">女</i>)</span></div><div class="a" style="left:479px;top:699px;width:34px;height:27px;background:#e6e0de;"></div><div class="a" style="left:479px;top:726px;width:35px;height:1px;background:#a5a2a0;"></div><div class="a" style="left:513px;top:699px;width:1px;height:28px;background:#a5a2a0;"></div><div class="t td" style="left:479px;top:701px;width:34px;height:27px;line-height:27px;color:#3a3a3a;white-space:nowrap;">0.97</div><div class="a" style="left:514px;top:699px;width:83px;height:27px;background:#e6e0de;"></div><div class="a" style="left:514px;top:726px;width:84px;height:1px;background:#a5a2a0;"></div><div class="a" style="left:597px;top:699px;width:1px;height:28px;background:#a5a2a0;"></div><div class="t td" style="left:514px;top:701px;width:83px;height:27px;line-height:27px;color:#3a3a3a;white-space:nowrap;"><i class="c">平手</i></div><div class="a" style="left:598px;top:699px;width:34px;height:27px;background:#e6e0de;"></div><div class="a" style="left:598px;top:726px;width:35px;height:1px;background:#a5a2a0;"></div><div class="a" style="left:632px;top:699px;width:1px;height:28px;background:#a5a2a0;"></div><div class="t td" style="left:598px;top:701px;width:34px;height:27px;line-height:27px;color:#3a3a3a;white-space:nowrap;">0.85</div><div class="a" style="left:633px;top:699px;width:57px;height:27px;background:#dddcd8;"></div><div class="a" style="left:633px;top:726px;width:58px;height:1px;background:#a5a2a0;"></div><div class="a" style="left:690px;top:699px;width:1px;height:28px;background:#a5a2a0;"></div><div class="t td" style="left:633px;top:701px;width:57px;height:27px;line-height:27px;color:#3a3a3a;white-space:nowrap;">2.58</div><div class="a" style="left:691px;top:699px;width:58px;height:27px;background:#dddcd8;"></div><div class="a" style="left:691px;top:726px;width:59px;height:1px;background:#a5a2a0;"></div><div class="a" style="left:749px;top:699px;width:1px;height:28px;background:#a5a2a0;"></div><div class="t td" style="left:691px;top:701px;width:58px;height:27px;line-height:27px;color:#3a3a3a;white-space:nowrap;">3.34</div><div class="a" style="left:750px;top:699px;width:57px;height:27px;background:#dddcd8;"></div><div class="a" style="left:750px;top:726px;width:58px;height:1px;background:#a5a2a0;"></div><div class="a" style="left:807px;top:699px;width:1px;height:28px;background:#a5a2a0;"></div><div class="t td" style="left:750px;top:701px;width:57px;height:27px;line-height:27px;color:#3a3a3a;white-space:nowrap;">2.48</div><div class="a" style="left:808px;top:699px;width:35px;height:27px;background:#e6e0de;"></div><div class="a" style="left:808px;top:726px;width:36px;height:1px;background:#a5a2a0;"></div><div class="a" style="left:843px;top:699px;width:1px;height:28px;background:#a5a2a0;"></div><div class="t td" style="left:808px;top:701px;width:35px;height:27px;line-height:27px;color:#157d15;white-space:nowrap;"><i class="c">負</i></div><div class="a" style="left:844px;top:699px;width:36px;height:27px;background:#e6e0de;"></div><div class="a" style="left:844px;top:726px;width:37px;height:1px;background:#a5a2a0;"></div><div class="a" style="left:880px;top:699px;width:1px;height:28px;background:#a5a2a0;"></div><div class="t td" style="left:844px;top:701px;width:36px;height:27px;line-height:27px;color:#157d15;white-space:nowrap;"><i class="c">輸</i></div><div class="a" style="left:881px;top:699px;width:42px;height:27px;background:#e6e0de;"></div><div class="a" style="left:881px;top:726px;width:43px;height:1px;background:#a5a2a0;"></div><div class="t td" style="left:881px;top:701px;width:50px;height:27px;line-height:27px;color:#157d15;white-space:nowrap;"><i class="c">小</i></div><div class="a" style="left:23px;top:727px;width:1px;height:28px;background:#c9c3c1;"></div><div class="a" style="left:24px;top:727px;width:68px;height:27px;background:#bb1a45;"></div><div class="a" style="left:24px;top:754px;width:68px;height:1px;background:#cc5a78;"></div><div class="a" style="left:92px;top:727px;width:1px;height:28px;background:#cc5a78;"></div><div class="t ty" style="left:24px;top:729px;width:68px;height:27px;line-height:27px;color:#ffffff;white-space:nowrap;"><i class="c">欧女国联</i></div><div class="a" style="left:93px;top:727px;width:67px;height:27px;background:#ddd8d6;"></div><div class="a" style="left:93px;top:754px;width:68px;height:1px;background:#a5a2a0;"></div><div class="a" style="left:160px;top:727px;width:1px;height:28px;background:#a5a2a0;"></div><div class="t td" style="left:93px;top:729px;width:67px;height:27px;line-height:27px;color:#3a3a3a;white-space:nowrap;">25-02-22</div><div class="a" style="left:161px;top:727px;width:114px;height:27px;background:#ddd8d6;"></div><div class="a" style="left:161px;top:754px;width:115px;height:1px;background:#a5a2a0;"></div><div class="a" style="left:275px;top:727px;width:1px;height:28px;background:#a5a2a0;"></div><div class="t td" style="left:161px;top:729px;width:114px;height:27px;line-height:27px;color:#3a3a3a;white-space:nowrap;"><span style="color:#3a3a3a"><i class="c">西班牙</i> (<i class="c">女</i>)</span></div><div class="a" style="left:276px;top:727px;width:80px;height:27px;background:#ddd8d6;"></div><div class="a" style="left:276px;top:754px;width:81px;height:1px;background:#a5a2a0;"></div><div class="a" style="left:356px;top:727px;width:1px;height:28px;background:#a5a2a0;"></div><div class="t td" style="left:276px;top:729px;width:80px;height:27px;line-height:27px;color:#3a3a3a;white-space:nowrap;"><span style="color:#d00a0a">3-2</span>(0-1)</div><div class="a" style="left:357px;top:727px;width:35px;height:27px;background:#ddd8d6;"></div><div class="a" style="left:357px;top:754px;width:36px;height:1px;background:#a5a2a0;"></div><div class="a" style="left:392px;top:727px;width:1px;height:28px;background:#a5a2a0;"></div><div class="t td" style="left:357px;top:729px;width:35px;height:27px;line-height:27px;color:#3a3a3a;white-space:nowrap;">19-2</div><div class="a" style="left:393px;top:727px;width:85px;height:27px;background:#ddd8d6;"></div><div class="a" style="left:393px;top:754px;width:86px;height:1px;background:#a5a2a0;"></div><div class="a" style="left:478px;top:727px;width:1px;height:28px;background:#a5a2a0;"></div><div class="t td" style="left:393px;top:729px;width:85px;height:27px;line-height:27px;color:#3a3a3a;white-space:nowrap;"><span style="color:#157d15"><i class="c">比利时</i> (<i class="c">女</i>)</span></div><div class="a" style="left:479px;top:727px;width:34px;height:27px;background:#ddd8d6;"></div><div class="a" style="left:479px;top:754px;width:35px;height:1px;background:#a5a2a0;"></div><div class="a" style="left:513px;top:727px;width:1px;height:28px;background:#a5a2a0;"></div><div class="t td" style="left:479px;top:729px;width:34px;height:27px;line-height:27px;color:#3a3a3a;white-space:nowrap;">0.91</div><div class="a" style="left:514px;top:727px;width:83px;height:27px;background:#ddd8d6;"></div><div class="a" style="left:514px;top:754px;width:84px;height:1px;background:#a5a2a0;"></div><div class="a" style="left:597px;top:727px;width:1px;height:28px;background:#a5a2a0;"></div><div class="t td" style="left:514px;top:729px;width:83px;height:27px;line-height:27px;color:#3a3a3a;white-space:nowrap;"><i class="c">三球</i></div><div class="a" style="left:598px;top:727px;width:34px;height:27px;background:#ddd8d6;"></div><div class="a" style="left:598px;top:754px;width:35px;height:1px;background:#a5a2a0;"></div><div class="a" style="left:632px;top:727px;width:1px;height:28px;background:#a5a2a0;"></div><div class="t td" style="left:598px;top:729px;width:34px;height:27px;line-height:27px;color:#3a3a3a;white-space:nowrap;">0.91</div><div class="a" style="left:633px;top:727px;width:57px;height:27px;background:#d7d6d3;"></div><div class="a" style="left:633px;top:754px;width:58px;height:1px;background:#a5a2a0;"></div><div class="a" style="left:690px;top:727px;width:1px;height:28px;background:#a5a2a0;"></div><div class="t td" style="left:633px;top:729px;width:57px;height:27px;line-height:27px;color:#3a3a3a;white-space:nowrap;">1.04</div><div class="a" style="left:691px;top:727px;width:58px;height:27px;background:#d7d6d3;"></div><div class="a" style="left:691px;top:754px;width:59px;height:1px;background:#a5a2a0;"></div><div class="a" style="left:749px;top:727px;width:1px;height:28px;background:#a5a2a0;"></div><div class="t td" style="left:691px;top:729px;width:58px;height:27px;line-height:27px;color:#3a3a3a;white-space:nowrap;">12.38</div><div class="a" style="left:750px;top:727px;width:57px;height:27px;background:#d7d6d3;"></div><div class="a" style="left:750px;top:754px;width:58px;height:1px;background:#a5a2a0;"></div><div class="a" style="left:807px;top:727px;width:1px;height:28px;background:#a5a2a0;"></div><div class="t td" style="left:750px;top:729px;width:57px;height:27px;line-height:27px;color:#3a3a3a;white-space:nowrap;">25.66</div><div class="a" style="left:808px;top:727px;width:35px;height:27px;background:#ddd8d6;"></div><div class="a" style="left:808px;top:754px;width:36px;height:1px;background:#a5a2a0;"></div><div class="a" style="left:843px;top:727px;width:1px;height:28px;background:#a5a2a0;"></div><div class="t td" style="left:808px;top:729px;width:35px;height:27px;line-height:27px;color:#157d15;white-space:nowrap;"><i class="c">負</i></div><div class="a" style="left:844px;top:727px;width:36px;height:27px;background:#ddd8d6;"></div><div class="a" style="left:844px;top:754px;width:37px;height:1px;background:#a5a2a0;"></div><div class="a" style="left:880px;top:727px;width:1px;height:28px;background:#a5a2a0;"></div><div class="t td" style="left:844px;top:729px;width:36px;height:27px;line-height:27px;color:#d00a0a;white-space:nowrap;"><i class="c">赢</i></div><div class="a" style="left:881px;top:727px;width:42px;height:27px;background:#ddd8d6;"></div><div class="a" style="left:881px;top:754px;width:43px;height:1px;background:#a5a2a0;"></div><div class="t td" style="left:881px;top:729px;width:50px;height:27px;line-height:27px;color:#d00a0a;white-space:nowrap;"><i class="c">大</i></div><div class="a" style="left:23px;top:755px;width:900px;height:4px;background:#e6e2e0;"></div><div class="a" style="left:171px;top:59px;width:1px;height:4px;background:#cbcacc;"></div><div class="a" style="left:23px;top:59px;width:1px;height:321px;background:#aaa6a4;"></div><div class="a" style="left:23px;top:434px;width:1px;height:321px;background:#aaa6a4;"></div><div class="a" style="left:24px;top:99px;width:81px;height:1px;background:#d8a888;"></div><div class="a" style="left:24px;top:474px;width:68px;height:1px;background:#d8a888;"></div></body></html>
